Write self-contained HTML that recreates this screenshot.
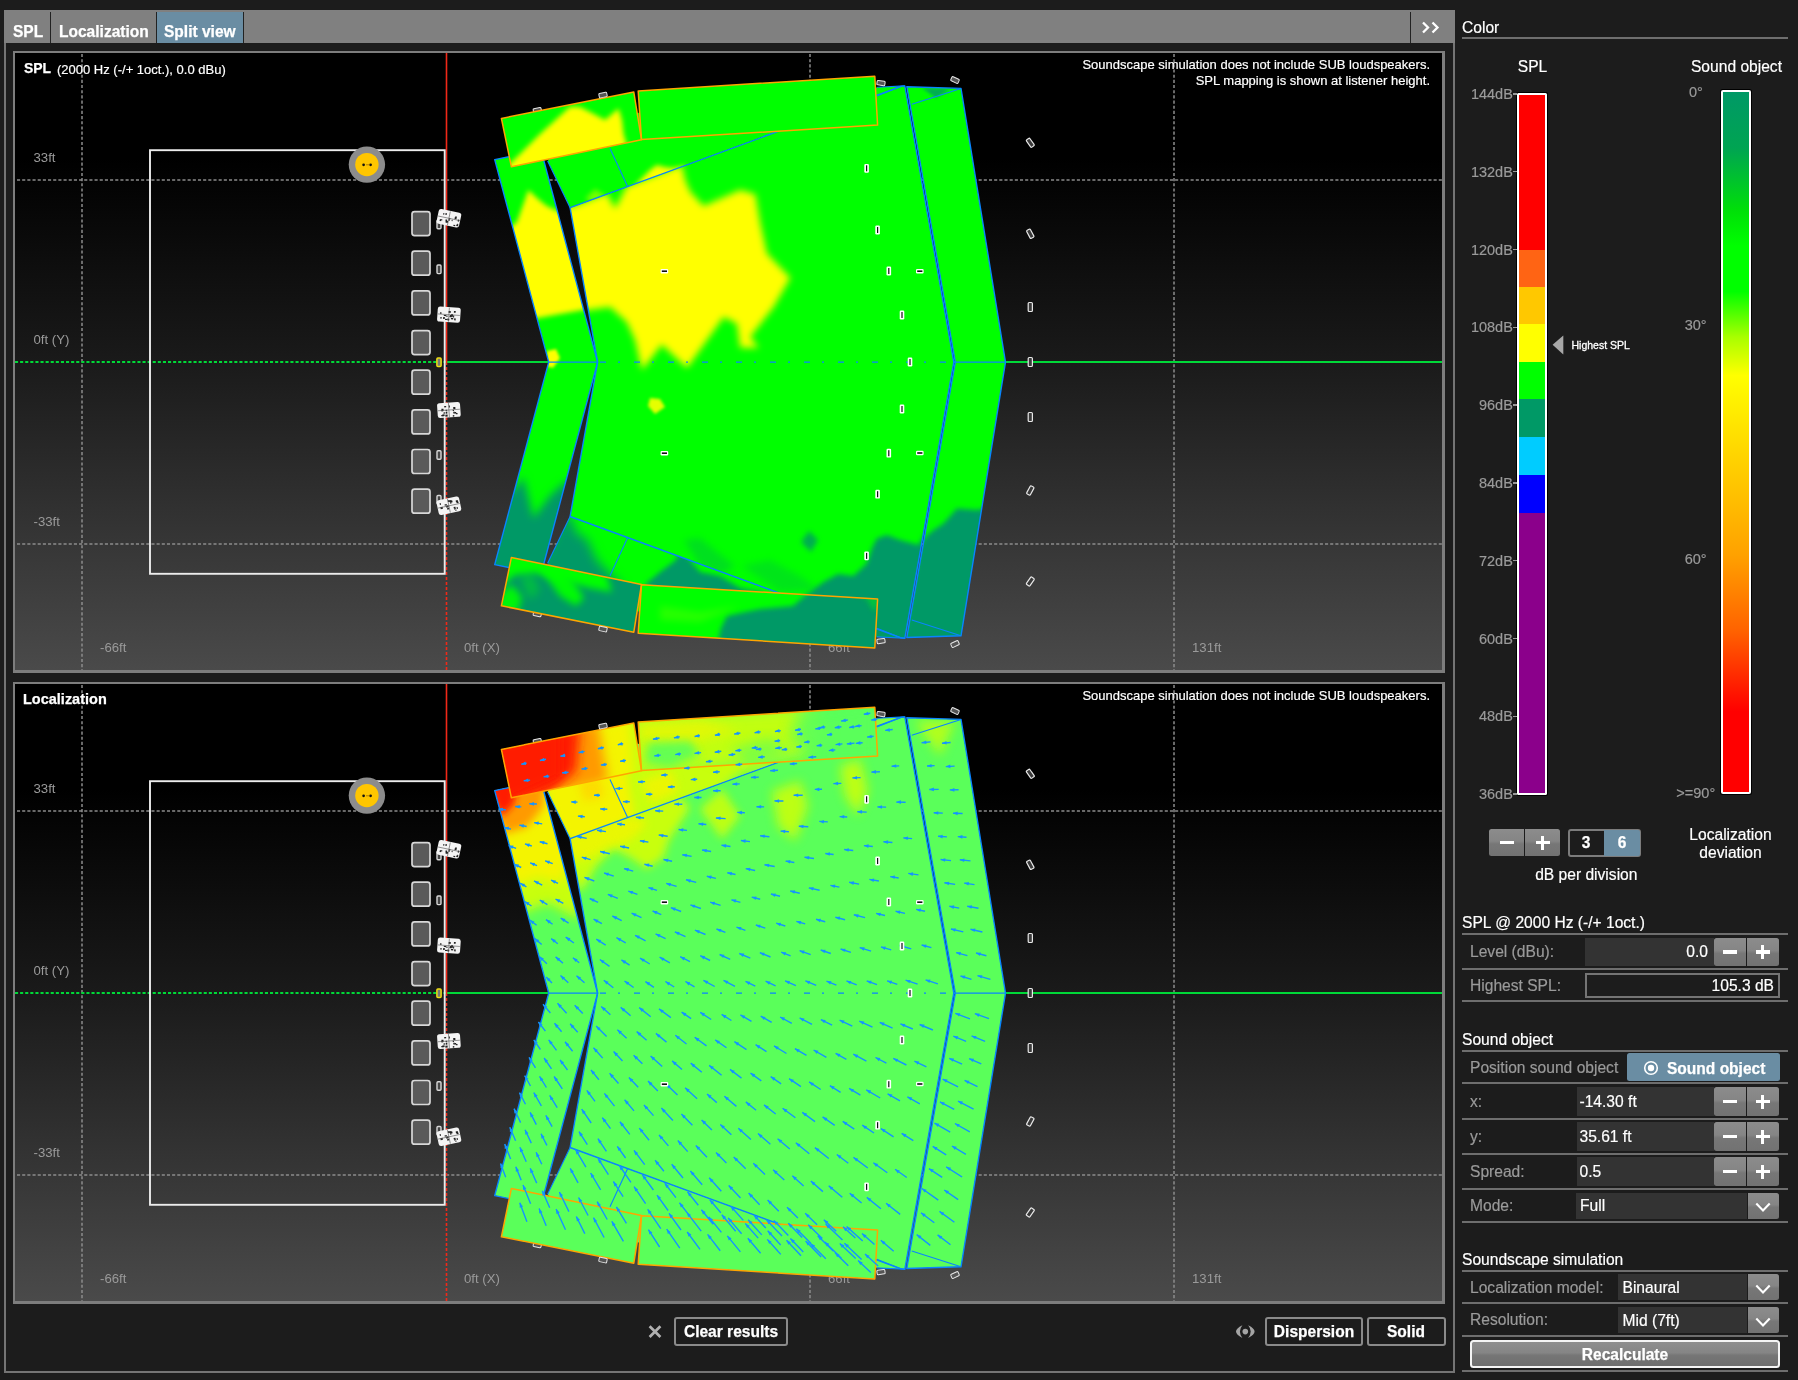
<!DOCTYPE html>
<html lang="en"><head><meta charset="utf-8"><title>Soundscape simulation</title>
<style>
html,body{margin:0;padding:0;}
body{width:1798px;height:1380px;background:#1c1c1c;overflow:hidden;position:relative;
 font-family:"Liberation Sans",sans-serif;font-size:15px;color:#fff;}
#app{position:absolute;left:0;top:0;width:1798px;height:1380px;will-change:transform;}
.abs{position:absolute;}
.t{position:absolute;white-space:nowrap;line-height:1;-webkit-text-stroke:0.18px currentColor;}
.g{color:#9a9a9a;}
.b,.bt{font-weight:bold;-webkit-text-stroke:0.25px currentColor;}
.hl{position:absolute;height:2px;background:#6e6e6e;left:1462px;width:326px;}
.fld{position:absolute;background:#333;}
.btn{position:absolute;background:linear-gradient(#8c8c8c 0%,#858585 45%,#777 55%,#727272 100%);border-radius:2px;}
.sec{left:1462px;}
.lab{left:1470px;color:#9a9a9a;}
svg{position:absolute;overflow:hidden;}
</style></head>
<body>
<div id="app">
<div class="abs" style="left:4px;top:10.3px;width:1447px;height:1358.9px;border:2px solid #747474;box-sizing:content-box"></div>
<div class="abs" style="left:4px;top:10.3px;width:1451px;height:32.9px;background:#808080"></div>
<div class="abs" style="left:157px;top:11.5px;width:86px;height:31.7px;background:#6a8da3"></div>
<div class="abs" style="left:50px;top:12px;width:1.3px;height:31px;background:#222"></div>
<div class="abs" style="left:156px;top:12px;width:1.3px;height:31px;background:#222"></div>
<div class="abs" style="left:243px;top:12px;width:1.3px;height:31px;background:#222"></div>
<div class="abs" style="left:1410px;top:12px;width:1.3px;height:31px;background:#222"></div>
<div class="t b" style="left:12.5px;top:23.1px;font-size:16.28px;transform:scaleX(0.955);transform-origin:left 50%;">SPL</div>
<div class="t b" style="left:58.5px;top:23.1px;font-size:16.28px;transform:scaleX(0.955);transform-origin:left 50%;">Localization</div>
<div class="t b" style="left:164px;top:23.1px;font-size:16.28px;transform:scaleX(0.955);transform-origin:left 50%;">Split view</div>
<svg style="left:1420px;top:18px" width="24" height="20" viewBox="0 0 24 20"><path d="M3 4.5 L8 9.5 L3 14.5 M12.5 4.5 L17.5 9.5 L12.5 14.5" fill="none" stroke="#fff" stroke-width="2.3"/></svg>
<div class="abs" style="left:13px;top:51.0px;width:1427.2px;height:617px;border:2px solid #7d7d7d;border-right-width:3.6px;border-bottom-width:3.6px;background:linear-gradient(#000 0%,#000 17%,#1a1a1a 50%,#4a4a4a 100%)"></div>
<svg style="left:15px;top:53.0px" width="1427" height="617" viewBox="15 53 1427 617" font-family="Liberation Sans, sans-serif"><defs><filter id="b2" x="-30%" y="-30%" width="160%" height="160%"><feGaussianBlur stdDeviation="1.8"/></filter><filter id="b3" x="-30%" y="-30%" width="160%" height="160%"><feGaussianBlur stdDeviation="2.7"/></filter><filter id="b4" x="-30%" y="-30%" width="160%" height="160%"><feGaussianBlur stdDeviation="3.6"/></filter><filter id="b5" x="-30%" y="-30%" width="160%" height="160%"><feGaussianBlur stdDeviation="4.5"/></filter><filter id="b6" x="-30%" y="-30%" width="160%" height="160%"><feGaussianBlur stdDeviation="5.4"/></filter><filter id="b8" x="-30%" y="-30%" width="160%" height="160%"><feGaussianBlur stdDeviation="7.2"/></filter><clipPath id="splwing"><polygon points="494.7,159.6 541.0,150.0 597.6,362.1 541.0,574.2 494.7,564.6 548.7,362.1"/></clipPath><clipPath id="splsu"><polygon points="547.6,161.0 570.1,207.7 901.0,86.4 904.8,85.9 870.0,87.6 870.0,105.0 640.0,112.0 560.0,142.0"/></clipPath><clipPath id="splsl"><polygon points="547.6,563.2 570.1,516.5 901.0,637.8 904.8,638.3 870.0,636.6 870.0,619.2 640.0,612.2 560.0,582.2"/></clipPath><clipPath id="splmain"><polygon points="570.1,207.7 901.0,86.4 904.8,85.9 953.8,362.1 904.8,638.3 901.0,637.8 570.1,516.5 597.6,362.1"/></clipPath><clipPath id="splrw"><polygon points="906.8,86.7 961.0,88.4 1005.5,362.1 961.0,635.8 906.8,637.5 955.3,362.1"/></clipPath><clipPath id="splb1u"><polygon points="501.4,118.4 633.8,92.0 641.5,139.8 511.4,166.8"/></clipPath><clipPath id="splb2u"><polygon points="638.2,90.9 874.8,76.2 877.6,125.1 641.5,139.5"/></clipPath><clipPath id="splb1l"><polygon points="501.4,605.8 633.8,632.2 641.5,584.4 511.4,557.4"/></clipPath><clipPath id="splb2l"><polygon points="638.2,633.3 874.8,648.0 877.6,599.1 641.5,584.7"/></clipPath></defs><line x1="82" y1="54" x2="82" y2="670" stroke="#8c8c8c" stroke-width="1.5" stroke-dasharray="3.1 2.07"/><line x1="810" y1="54" x2="810" y2="670" stroke="#8c8c8c" stroke-width="1.5" stroke-dasharray="3.1 2.07"/><line x1="1174" y1="54" x2="1174" y2="670" stroke="#8c8c8c" stroke-width="1.5" stroke-dasharray="3.1 2.07"/><line x1="17" y1="180" x2="1442" y2="180" stroke="#8c8c8c" stroke-width="1.5" stroke-dasharray="3.1 2.07"/><line x1="17" y1="544" x2="1442" y2="544" stroke="#8c8c8c" stroke-width="1.5" stroke-dasharray="3.1 2.07"/><line x1="15" y1="362" x2="446" y2="362" stroke="#00d838" stroke-width="1.9" stroke-dasharray="3.1 2"/><line x1="446" y1="362" x2="1442" y2="362" stroke="#00d838" stroke-width="1.9"/><line x1="446.5" y1="53" x2="446.5" y2="362" stroke="#f02818" stroke-width="1.6"/><line x1="446.5" y1="362" x2="446.5" y2="670" stroke="#f02818" stroke-width="1.6" stroke-dasharray="3 2"/><rect x="150" y="150.2" width="294.7" height="423.6" fill="none" stroke="#ececec" stroke-width="1.9"/><text x="33.5" y="161.7" fill="#9a9a9a" font-size="13.2">33ft</text><text x="33.5" y="343.7" fill="#9a9a9a" font-size="13.2">0ft (Y)</text><text x="33.5" y="525.7" fill="#9a9a9a" font-size="13.2">-33ft</text><text x="100" y="651.5" fill="#9a9a9a" font-size="13.2">-66ft</text><text x="464" y="651.5" fill="#9a9a9a" font-size="13.2">0ft (X)</text><text x="828" y="651.5" fill="#9a9a9a" font-size="13.2">66ft</text><text x="1192" y="651.5" fill="#9a9a9a" font-size="13.2">131ft</text><g clip-path="url(#splwing)"><polygon points="494.7,159.6 541.0,150.0 597.6,362.1 541.0,574.2 494.7,564.6 548.7,362.1" fill="#00ff00"/><polygon points="505.0,232.0 517.0,222.0 528.4,190.0 538.0,199.0 546.7,206.0 562.0,213.0 600.0,306.0 583.0,310.0 560.0,314.0 538.0,318.0 525.0,318.0" fill="#ffff00" filter="url(#b3)"/><polygon points="547.0,351.0 556.0,349.0 560.0,358.0 553.0,368.0 546.0,366.0" fill="#ffff00" filter="url(#b2)"/><polygon points="500.0,494.0 513.4,490.0 523.4,477.0 533.4,518.0 550.0,496.0 561.8,485.0 575.0,478.0 575.0,600.0 480.0,600.0" fill="#009966" filter="url(#b5)"/></g><g clip-path="url(#splsu)"><polygon points="547.6,161.0 570.1,207.7 901.0,86.4 904.8,85.9 870.0,87.6 870.0,105.0 640.0,112.0 560.0,142.0" fill="#00ff00"/><polygon points="630.0,192.0 640.0,180.0 650.0,170.0 657.0,165.0 664.0,167.0 672.0,168.0 686.0,166.0 690.0,185.0 650.0,200.0" fill="#ffff00" filter="url(#b3)"/><polygon points="585.0,199.0 595.0,189.0 606.0,196.0 600.0,206.0" fill="#ffff00" filter="url(#b3)" opacity="0.45"/><polygon points="612.0,208.0 618.0,196.0 628.0,190.0 630.0,200.0" fill="#ffff00" filter="url(#b3)" opacity="0.5"/></g><g clip-path="url(#splsl)"><polygon points="547.6,563.2 570.1,516.5 901.0,637.8 904.8,638.3 870.0,636.6 870.0,619.2 640.0,612.2 560.0,582.2" fill="#00ff00"/><polygon points="535.0,590.0 540.0,560.0 566.0,512.0 572.0,520.0 576.8,533.5 586.8,538.5 592.0,550.0 596.8,560.2 611.8,575.2 625.0,590.0" fill="#009966" filter="url(#b6)"/><polygon points="646.9,583.0 660.0,572.0 676.0,560.0 680.2,546.8 690.0,560.0 700.0,572.0 720.0,576.0 740.0,588.0 760.0,592.0 800.0,610.0 640.0,600.0" fill="#009966" filter="url(#b3)"/><polygon points="860.0,600.0 880.0,612.0 905.0,625.0 905.0,640.0 860.0,640.0" fill="#009966" filter="url(#b3)"/></g><g clip-path="url(#splmain)"><polygon points="570.1,207.7 901.0,86.4 904.8,85.9 953.8,362.1 904.8,638.3 901.0,637.8 570.1,516.5 597.6,362.1" fill="#00ff00"/><polygon points="560.0,200.0 570.0,207.6 606.7,193.0 615.1,208.4 626.8,186.0 681.8,165.0 685.2,180.0 690.2,191.7 703.5,205.9 740.2,190.1 755.3,194.2 760.3,223.4 766.9,253.5 790.3,277.7 773.6,306.9 750.2,336.9 758.6,347.7 740.2,347.7 736.9,323.5 723.5,316.9 706.9,340.2 687.0,368.0 661.8,344.5 642.0,370.0 635.1,340.2 626.8,321.9 610.1,306.9 586.7,310.2 560.0,311.0" fill="#ffff00" filter="url(#b4)"/><polygon points="650.0,398.0 660.0,399.0 665.0,407.0 655.0,414.0 648.0,406.0" fill="#ffff00" filter="url(#b2)" opacity="0.9"/><polygon points="800.0,600.0 823.4,582.0 838.0,574.0 853.4,576.0 866.8,563.5 872.0,548.0 876.8,538.5 886.8,535.0 900.0,540.0 918.5,545.0 926.9,530.0 960.0,520.0 960.0,660.0 800.0,660.0" fill="#009966" filter="url(#b3)"/><polygon points="809.0,531.0 818.0,540.0 811.0,552.0 801.0,542.0" fill="#009966" filter="url(#b3)" opacity="0.8"/><polygon points="684.0,540.0 700.0,538.0 722.0,556.0 735.0,566.0 720.0,575.0 700.0,566.0" fill="#009966" filter="url(#b4)" opacity="0.3"/><polygon points="742.0,566.0 770.0,560.0 800.0,576.0 820.0,590.0 780.0,592.0" fill="#009966" filter="url(#b4)" opacity="0.25"/></g><g clip-path="url(#splrw)"><polygon points="906.8,86.7 961.0,88.4 1005.5,362.1 961.0,635.8 906.8,637.5 955.3,362.1" fill="#00ff00"/><polygon points="920.0,545.0 925.0,537.0 933.5,530.0 943.5,523.4 956.9,508.4 977.0,510.0 1000.0,505.0 1000.0,660.0 900.0,660.0" fill="#009966" filter="url(#b3)"/><polygon points="922.0,88.0 950.0,89.0 936.0,98.0" fill="#009966" filter="url(#b2)" opacity="0.8"/></g><polygon points="494.7,159.6 541.0,150.0 597.6,362.1 541.0,574.2 494.7,564.6 548.7,362.1" fill="none" stroke="#0a84ff" stroke-width="1.4" stroke-linejoin="round"/><polygon points="570.1,207.7 901.0,86.4 904.8,85.9 953.8,362.1 904.8,638.3 901.0,637.8 570.1,516.5 597.6,362.1" fill="none" stroke="#0a84ff" stroke-width="1.4" stroke-linejoin="round"/><polygon points="906.8,86.7 961.0,88.4 1005.5,362.1 961.0,635.8 906.8,637.5 955.3,362.1" fill="none" stroke="#0a84ff" stroke-width="1.4" stroke-linejoin="round"/><line x1="547.6" y1="161" x2="570.1" y2="207.7" stroke="#0a84ff" stroke-width="1.1"/><line x1="610" y1="148.4" x2="627.7" y2="186.8" stroke="#0a84ff" stroke-width="1.1"/><line x1="876.8" y1="95.9" x2="901" y2="86.4" stroke="#0a84ff" stroke-width="1.1"/><line x1="911.8" y1="104.2" x2="960.2" y2="88.7" stroke="#0a84ff" stroke-width="1.1"/><line x1="877" y1="87.3" x2="904.8" y2="85.9" stroke="#0a84ff" stroke-width="1.1"/><line x1="547.6" y1="563.2" x2="570.1" y2="516.5" stroke="#0a84ff" stroke-width="1.1"/><line x1="610" y1="575.8000000000001" x2="627.7" y2="537.4000000000001" stroke="#0a84ff" stroke-width="1.1"/><line x1="876.8" y1="628.3000000000001" x2="901" y2="637.8000000000001" stroke="#0a84ff" stroke-width="1.1"/><line x1="911.8" y1="620.0" x2="960.2" y2="635.5" stroke="#0a84ff" stroke-width="1.1"/><line x1="877" y1="636.9000000000001" x2="904.8" y2="638.3000000000001" stroke="#0a84ff" stroke-width="1.1"/><line x1="600" y1="362.1" x2="952" y2="362.1" stroke="#0a84ff" stroke-width="1.1" stroke-dasharray="6 12 2 14"/><line x1="548.7" y1="362.1" x2="597.6" y2="362.1" stroke="#0a84ff" stroke-width="1.2"/><line x1="953.8" y1="362.1" x2="1005.5" y2="362.1" stroke="#0a84ff" stroke-width="1.2"/><rect x="533.3" y="108.0" width="8" height="4.5" rx="1" fill="#555" stroke="#e8e8e8" stroke-width="1" transform="rotate(-12 537.3 110.2)"/><rect x="533.3" y="611.6" width="8" height="4.5" rx="1" fill="#555" stroke="#e8e8e8" stroke-width="1" transform="rotate(12 537.3 613.9)"/><g clip-path="url(#splb1u)"><polygon points="501.4,118.4 633.8,92.0 641.5,139.8 511.4,166.8" fill="#00ff00"/><polygon points="500.0,172.0 512.0,162.0 540.0,134.0 570.0,106.7 580.0,107.0 592.0,113.0 605.0,120.0 618.5,108.4 622.0,120.0 623.5,133.4 628.0,150.0 560.0,170.0" fill="#ffff00" filter="url(#b3)"/></g><g clip-path="url(#splb2u)"><polygon points="638.2,90.9 874.8,76.2 877.6,125.1 641.5,139.5" fill="#00ff00"/></g><g clip-path="url(#splb1l)"><polygon points="501.4,605.8 633.8,632.2 641.5,584.4 511.4,557.4" fill="#00ff00"/><polygon points="490.0,540.0 660.0,540.0 660.0,650.0 490.0,650.0" fill="#009966" filter="url(#b2)"/><polygon points="498.0,548.0 515.0,550.0 560.0,561.0 606.0,573.0 612.0,592.0 590.0,588.0 574.0,584.0 560.0,580.0 536.0,573.0 514.0,575.0 505.0,584.0 496.0,580.0" fill="#00ff00" filter="url(#b4)"/><polygon points="538.0,566.0 560.0,566.0 574.0,582.0 584.0,598.0 576.0,606.0 560.0,596.0" fill="#00ff00" filter="url(#b4)" opacity="0.95"/><polygon points="494.0,616.0 501.0,592.0 512.0,585.0 522.0,597.0 518.0,612.0" fill="#00ff00" filter="url(#b4)" opacity="0.9"/><polygon points="520.0,578.0 532.0,574.0 540.0,590.0 530.0,600.0" fill="#00ff00" filter="url(#b5)" opacity="0.35"/></g><g clip-path="url(#splb2l)"><polygon points="638.2,633.3 874.8,648.0 877.6,599.1 641.5,584.7" fill="#00ff00"/><polygon points="716.0,650.0 721.0,628.0 727.0,616.0 745.0,612.0 760.0,609.0 793.0,606.0 800.0,600.0 806.8,594.0 812.0,580.0 890.0,580.0 890.0,660.0 716.0,660.0" fill="#009966" filter="url(#b3)"/><polygon points="858.0,596.0 866.0,598.0 874.0,612.0 880.0,600.0 880.0,590.0 858.0,590.0" fill="#00e020" filter="url(#b3)" opacity="0.6"/><polygon points="660.0,606.0 700.0,612.0 740.0,606.0 700.0,622.0 660.0,620.0" fill="#70ff00" filter="url(#b4)" opacity="0.35"/></g><polygon points="501.4,118.4 633.8,92.0 641.5,139.8 511.4,166.8" fill="none" stroke="#ffa500" stroke-width="1.5" stroke-linejoin="round"/><polygon points="638.2,90.9 874.8,76.2 877.6,125.1 641.5,139.5" fill="none" stroke="#ffa500" stroke-width="1.5" stroke-linejoin="round"/><polygon points="501.4,605.8 633.8,632.2 641.5,584.4 511.4,557.4" fill="none" stroke="#ffa500" stroke-width="1.5" stroke-linejoin="round"/><polygon points="638.2,633.3 874.8,648.0 877.6,599.1 641.5,584.7" fill="none" stroke="#ffa500" stroke-width="1.5" stroke-linejoin="round"/><rect x="864.3000000000001" y="163.9" width="4.6" height="8.8" rx="1.2" fill="#fff"/><rect x="866.0" y="165.3" width="1.2" height="6" fill="#111"/><rect x="875.3000000000001" y="225.6" width="4.6" height="8.8" rx="1.2" fill="#fff"/><rect x="877.0" y="227" width="1.2" height="6" fill="#111"/><rect x="886.5" y="266.6" width="4.6" height="8.8" rx="1.2" fill="#fff"/><rect x="888.1999999999999" y="268" width="1.2" height="6" fill="#111"/><rect x="916.0" y="268.9" width="7.6" height="4.6" rx="1.2" fill="#fff"/><rect x="917.1999999999999" y="270.4" width="5.2" height="1.6" fill="#111"/><rect x="899.7" y="310.6" width="4.6" height="8.8" rx="1.2" fill="#fff"/><rect x="901.4" y="312" width="1.2" height="6" fill="#111"/><rect x="907.7" y="357.6" width="4.6" height="8.8" rx="1.2" fill="#fff"/><rect x="909.4" y="359" width="1.2" height="6" fill="#111"/><rect x="899.7" y="404.6" width="4.6" height="8.8" rx="1.2" fill="#fff"/><rect x="901.4" y="406" width="1.2" height="6" fill="#111"/><rect x="886.5" y="448.8" width="4.6" height="8.8" rx="1.2" fill="#fff"/><rect x="888.1999999999999" y="450.2" width="1.2" height="6" fill="#111"/><rect x="916.0" y="450.7" width="7.6" height="4.6" rx="1.2" fill="#fff"/><rect x="917.1999999999999" y="452.2" width="5.2" height="1.6" fill="#111"/><rect x="875.3000000000001" y="489.8" width="4.6" height="8.8" rx="1.2" fill="#fff"/><rect x="877.0" y="491.2" width="1.2" height="6" fill="#111"/><rect x="864.3000000000001" y="551.5" width="4.6" height="8.8" rx="1.2" fill="#fff"/><rect x="866.0" y="552.9" width="1.2" height="6" fill="#111"/><rect x="660.6" y="268.9" width="7.6" height="4.6" rx="1.2" fill="#fff"/><rect x="661.8" y="270.4" width="5.2" height="1.6" fill="#111"/><rect x="660.6" y="450.9" width="7.6" height="4.6" rx="1.2" fill="#fff"/><rect x="661.8" y="452.4" width="5.2" height="1.6" fill="#111"/><rect x="1028.2" y="138.3" width="4.2" height="9" rx="1" fill="#3a3a3a" stroke="#e8e8e8" stroke-width="1.2" transform="rotate(-35 1030.3 142.8)"/><rect x="1028.2" y="229.3" width="4.2" height="9" rx="1" fill="#3a3a3a" stroke="#e8e8e8" stroke-width="1.2" transform="rotate(-28 1030.3 233.8)"/><rect x="1028.2" y="302.5" width="4.2" height="9" rx="1" fill="#3a3a3a" stroke="#e8e8e8" stroke-width="1.2" transform="rotate(0 1030.3 307.0)"/><rect x="1028.2" y="357.5" width="4.2" height="9" rx="1" fill="#3a3a3a" stroke="#e8e8e8" stroke-width="1.2" transform="rotate(0 1030.3 362.0)"/><rect x="1028.2" y="412.5" width="4.2" height="9" rx="1" fill="#3a3a3a" stroke="#e8e8e8" stroke-width="1.2" transform="rotate(0 1030.3 417.0)"/><rect x="1028.2" y="486.0" width="4.2" height="9" rx="1" fill="#3a3a3a" stroke="#e8e8e8" stroke-width="1.2" transform="rotate(28 1030.3 490.5)"/><rect x="1028.2" y="577.0" width="4.2" height="9" rx="1" fill="#3a3a3a" stroke="#e8e8e8" stroke-width="1.2" transform="rotate(35 1030.3 581.5)"/><rect x="599.0" y="92.8" width="8" height="4.5" rx="1" fill="#555" stroke="#e8e8e8" stroke-width="1" transform="rotate(-12 603.0 95.0)"/><rect x="877.0" y="80.8" width="8" height="4.5" rx="1" fill="#555" stroke="#e8e8e8" stroke-width="1" transform="rotate(8 881.0 83.0)"/><rect x="951.0" y="77.8" width="8" height="4.5" rx="1" fill="#555" stroke="#e8e8e8" stroke-width="1" transform="rotate(25 955.0 80.0)"/><rect x="599.0" y="626.8" width="8" height="4.5" rx="1" fill="#555" stroke="#e8e8e8" stroke-width="1" transform="rotate(12 603.0 629.0)"/><rect x="877.0" y="638.8" width="8" height="4.5" rx="1" fill="#555" stroke="#e8e8e8" stroke-width="1" transform="rotate(-8 881.0 641.0)"/><rect x="951.0" y="641.8" width="8" height="4.5" rx="1" fill="#555" stroke="#e8e8e8" stroke-width="1" transform="rotate(-25 955.0 644.0)"/><rect x="437.0" y="220.2" width="4" height="8.6" rx="1" fill="#444" stroke="#d8d8d8" stroke-width="1.4" transform="rotate(0 439.0 224.5)"/><rect x="437.0" y="265.0" width="4" height="8.6" rx="1" fill="#444" stroke="#d8d8d8" stroke-width="1.4" transform="rotate(0 439.0 269.3)"/><rect x="437.0" y="450.7" width="4" height="8.6" rx="1" fill="#444" stroke="#d8d8d8" stroke-width="1.4" transform="rotate(0 439.0 455.0)"/><rect x="437.0" y="495.5" width="4" height="8.6" rx="1" fill="#444" stroke="#d8d8d8" stroke-width="1.4" transform="rotate(0 439.0 499.8)"/><rect x="436.9" y="357.9" width="4.2" height="8.6" rx="1" fill="#777" stroke="#f0e010" stroke-width="1.5" transform="rotate(0 439.0 362.2)"/><rect x="412" y="211.6" width="18" height="24" rx="2.5" fill="#5a5a5a" stroke="#d8d8d8" stroke-width="1.7"/><rect x="412" y="251.2" width="18" height="24" rx="2.5" fill="#5a5a5a" stroke="#d8d8d8" stroke-width="1.7"/><rect x="412" y="290.9" width="18" height="24" rx="2.5" fill="#5a5a5a" stroke="#d8d8d8" stroke-width="1.7"/><rect x="412" y="330.6" width="18" height="24" rx="2.5" fill="#5a5a5a" stroke="#d8d8d8" stroke-width="1.7"/><rect x="412" y="370.2" width="18" height="24" rx="2.5" fill="#5a5a5a" stroke="#d8d8d8" stroke-width="1.7"/><rect x="412" y="409.9" width="18" height="24" rx="2.5" fill="#5a5a5a" stroke="#d8d8d8" stroke-width="1.7"/><rect x="412" y="449.5" width="18" height="24" rx="2.5" fill="#5a5a5a" stroke="#d8d8d8" stroke-width="1.7"/><rect x="412" y="489.2" width="18" height="24" rx="2.5" fill="#5a5a5a" stroke="#d8d8d8" stroke-width="1.7"/><g transform="translate(448.9 218.3) rotate(12)"><rect x="-11.5" y="-7.5" width="23" height="15" rx="2.5" fill="#f4f4f4"/><rect x="9.1" y="-0.8" width="1.5" height="2.0" fill="#222"/><rect x="5.9" y="5.3" width="1.8" height="1.2" fill="#222"/><rect x="-2.5" y="2.7" width="2.3" height="2.1" fill="#222"/><rect x="3.1" y="0.7" width="1.0" height="1.5" fill="#222"/><rect x="9.1" y="3.6" width="1.3" height="1.0" fill="#222"/><rect x="-2.4" y="2.2" width="1.0" height="2.1" fill="#222"/><rect x="0.0" y="1.0" width="1.4" height="1.3" fill="#222"/><rect x="-8.7" y="3.1" width="1.6" height="1.3" fill="#222"/><rect x="-4.3" y="-4.5" width="1.4" height="1.8" fill="#222"/><rect x="6.0" y="-3.3" width="1.4" height="1.8" fill="#222"/><rect x="-6.5" y="-4.1" width="1.1" height="1.5" fill="#222"/><rect x="8.7" y="4.6" width="1.9" height="1.4" fill="#222"/><rect x="-8.3" y="2.4" width="2.2" height="1.1" fill="#222"/><rect x="5.6" y="-2.5" width="1.9" height="2.0" fill="#222"/><rect x="0.3" y="-0.3" width="1.2" height="1.2" fill="#222"/><rect x="-2.9" y="1.7" width="1.6" height="1.5" fill="#222"/><path d="M-11 0 H11 M0 -7 V7" stroke="#555" stroke-width="0.6"/></g><g transform="translate(448.9 314.7) rotate(4)"><rect x="-11.5" y="-7.5" width="23" height="15" rx="2.5" fill="#f4f4f4"/><rect x="5.6" y="3.2" width="1.5" height="2.0" fill="#222"/><rect x="-0.5" y="-3.7" width="2.1" height="1.8" fill="#222"/><rect x="4.3" y="0.5" width="1.1" height="1.9" fill="#222"/><rect x="4.8" y="-4.1" width="1.8" height="1.8" fill="#222"/><rect x="0.8" y="1.1" width="1.4" height="1.4" fill="#222"/><rect x="2.4" y="-0.8" width="1.6" height="2.0" fill="#222"/><rect x="2.3" y="3.0" width="2.3" height="1.4" fill="#222"/><rect x="-9.0" y="-1.8" width="1.6" height="1.4" fill="#222"/><rect x="1.1" y="0.1" width="1.9" height="2.1" fill="#222"/><rect x="-8.5" y="3.1" width="1.7" height="1.2" fill="#222"/><rect x="-1.3" y="3.9" width="2.0" height="1.8" fill="#222"/><rect x="-5.5" y="2.7" width="1.6" height="1.9" fill="#222"/><rect x="-3.5" y="4.4" width="2.1" height="1.1" fill="#222"/><rect x="-5.0" y="0.5" width="2.2" height="1.1" fill="#222"/><rect x="2.1" y="0.0" width="2.2" height="1.7" fill="#222"/><rect x="-3.1" y="1.1" width="2.0" height="1.0" fill="#222"/><path d="M-11 0 H11 M0 -7 V7" stroke="#555" stroke-width="0.6"/></g><g transform="translate(448.9 410) rotate(-4)"><rect x="-11.5" y="-7.5" width="23" height="15" rx="2.5" fill="#f4f4f4"/><rect x="3.5" y="5.4" width="1.5" height="1.5" fill="#222"/><rect x="-3.2" y="1.5" width="1.5" height="2.0" fill="#222"/><rect x="-8.0" y="4.5" width="2.3" height="1.3" fill="#222"/><rect x="3.8" y="0.1" width="1.2" height="1.2" fill="#222"/><rect x="-7.0" y="3.9" width="2.3" height="1.9" fill="#222"/><rect x="-3.9" y="4.4" width="2.3" height="2.1" fill="#222"/><rect x="4.2" y="2.1" width="1.5" height="1.7" fill="#222"/><rect x="5.4" y="2.5" width="1.7" height="1.5" fill="#222"/><rect x="-3.3" y="-0.4" width="1.6" height="1.1" fill="#222"/><rect x="-7.4" y="-1.7" width="2.0" height="2.1" fill="#222"/><rect x="4.5" y="-2.6" width="2.1" height="2.1" fill="#222"/><rect x="0.2" y="-4.5" width="1.0" height="2.0" fill="#222"/><rect x="6.7" y="3.5" width="1.7" height="1.3" fill="#222"/><rect x="-5.6" y="2.0" width="1.8" height="1.3" fill="#222"/><rect x="-4.4" y="-4.3" width="1.9" height="1.4" fill="#222"/><rect x="-7.5" y="-0.8" width="1.8" height="1.7" fill="#222"/><path d="M-11 0 H11 M0 -7 V7" stroke="#555" stroke-width="0.6"/></g><g transform="translate(448.9 505.8) rotate(-12)"><rect x="-11.5" y="-7.5" width="23" height="15" rx="2.5" fill="#f4f4f4"/><rect x="-2.8" y="-0.6" width="2.4" height="1.9" fill="#222"/><rect x="2.7" y="-4.6" width="1.7" height="1.9" fill="#222"/><rect x="7.7" y="-3.9" width="2.1" height="2.2" fill="#222"/><rect x="-4.0" y="-2.3" width="2.2" height="1.3" fill="#222"/><rect x="-0.1" y="-5.5" width="1.6" height="1.7" fill="#222"/><rect x="5.3" y="5.3" width="1.3" height="1.0" fill="#222"/><rect x="8.4" y="-2.2" width="1.7" height="1.5" fill="#222"/><rect x="-8.7" y="-0.4" width="2.3" height="2.0" fill="#222"/><rect x="1.5" y="-4.8" width="2.3" height="1.6" fill="#222"/><rect x="-8.6" y="-4.5" width="1.1" height="1.9" fill="#222"/><rect x="1.8" y="-3.2" width="1.2" height="1.5" fill="#222"/><rect x="-2.3" y="1.9" width="1.8" height="1.6" fill="#222"/><rect x="0.9" y="-5.1" width="2.3" height="1.1" fill="#222"/><rect x="4.6" y="3.4" width="1.5" height="1.5" fill="#222"/><rect x="7.1" y="3.1" width="1.2" height="1.7" fill="#222"/><rect x="4.3" y="2.2" width="1.8" height="1.4" fill="#222"/><path d="M-11 0 H11 M0 -7 V7" stroke="#555" stroke-width="0.6"/></g><circle cx="366.9" cy="164.6" r="18.2" fill="#8c8c8c"/><circle cx="366.9" cy="164.6" r="11.7" fill="#ffc600"/><circle cx="363.6" cy="164.8" r="1.35" fill="#111"/><circle cx="370.6" cy="164.8" r="1.35" fill="#111"/><path d="M366 164.8 H369.5" stroke="#b07800" stroke-width="0.9"/></svg>
<div class="abs" style="left:13px;top:681.5px;width:1427.2px;height:617px;border:2px solid #7d7d7d;border-right-width:3.6px;border-bottom-width:3.6px;background:linear-gradient(#000 0%,#000 17%,#1a1a1a 50%,#4a4a4a 100%)"></div>
<svg style="left:15px;top:683.5px" width="1427" height="617" viewBox="15 53 1427 617" font-family="Liberation Sans, sans-serif"><defs><clipPath id="locwing"><polygon points="494.7,159.6 541.0,150.0 597.6,362.1 541.0,574.2 494.7,564.6 548.7,362.1"/></clipPath><clipPath id="locsu"><polygon points="547.6,161.0 570.1,207.7 901.0,86.4 904.8,85.9 870.0,87.6 870.0,105.0 640.0,112.0 560.0,142.0"/></clipPath><clipPath id="locsl"><polygon points="547.6,563.2 570.1,516.5 901.0,637.8 904.8,638.3 870.0,636.6 870.0,619.2 640.0,612.2 560.0,582.2"/></clipPath><clipPath id="locmain"><polygon points="570.1,207.7 901.0,86.4 904.8,85.9 953.8,362.1 904.8,638.3 901.0,637.8 570.1,516.5 597.6,362.1"/></clipPath><clipPath id="locrw"><polygon points="906.8,86.7 961.0,88.4 1005.5,362.1 961.0,635.8 906.8,637.5 955.3,362.1"/></clipPath><clipPath id="locb1u"><polygon points="501.4,118.4 633.8,92.0 641.5,139.8 511.4,166.8"/></clipPath><clipPath id="locb2u"><polygon points="638.2,90.9 874.8,76.2 877.6,125.1 641.5,139.5"/></clipPath><clipPath id="locb1l"><polygon points="501.4,605.8 633.8,632.2 641.5,584.4 511.4,557.4"/></clipPath><clipPath id="locb2l"><polygon points="638.2,633.3 874.8,648.0 877.6,599.1 641.5,584.7"/></clipPath></defs><line x1="82" y1="54" x2="82" y2="670" stroke="#8c8c8c" stroke-width="1.5" stroke-dasharray="3.1 2.07"/><line x1="810" y1="54" x2="810" y2="670" stroke="#8c8c8c" stroke-width="1.5" stroke-dasharray="3.1 2.07"/><line x1="1174" y1="54" x2="1174" y2="670" stroke="#8c8c8c" stroke-width="1.5" stroke-dasharray="3.1 2.07"/><line x1="17" y1="180" x2="1442" y2="180" stroke="#8c8c8c" stroke-width="1.5" stroke-dasharray="3.1 2.07"/><line x1="17" y1="544" x2="1442" y2="544" stroke="#8c8c8c" stroke-width="1.5" stroke-dasharray="3.1 2.07"/><line x1="15" y1="362" x2="446" y2="362" stroke="#00d838" stroke-width="1.9" stroke-dasharray="3.1 2"/><line x1="446" y1="362" x2="1442" y2="362" stroke="#00d838" stroke-width="1.9"/><line x1="446.5" y1="53" x2="446.5" y2="362" stroke="#f02818" stroke-width="1.6"/><line x1="446.5" y1="362" x2="446.5" y2="670" stroke="#f02818" stroke-width="1.6" stroke-dasharray="3 2"/><rect x="150" y="150.2" width="294.7" height="423.6" fill="none" stroke="#ececec" stroke-width="1.9"/><text x="33.5" y="161.7" fill="#9a9a9a" font-size="13.2">33ft</text><text x="33.5" y="343.7" fill="#9a9a9a" font-size="13.2">0ft (Y)</text><text x="33.5" y="525.7" fill="#9a9a9a" font-size="13.2">-33ft</text><text x="100" y="651.5" fill="#9a9a9a" font-size="13.2">-66ft</text><text x="464" y="651.5" fill="#9a9a9a" font-size="13.2">0ft (X)</text><text x="828" y="651.5" fill="#9a9a9a" font-size="13.2">66ft</text><text x="1192" y="651.5" fill="#9a9a9a" font-size="13.2">131ft</text><g clip-path="url(#locwing)"><polygon points="494.7,159.6 541.0,150.0 597.6,362.1 541.0,574.2 494.7,564.6 548.7,362.1" fill="#5aff5a"/><polygon points="480.0,140.0 570.0,140.0 588.0,240.0 578.0,288.0 548.0,272.0 522.0,282.0 505.0,240.0" fill="#c8ff10" filter="url(#b6)"/><polygon points="480.0,140.0 565.0,140.0 574.0,215.0 562.0,252.0 537.0,246.0 516.0,256.0 498.0,220.0" fill="#f4f400" filter="url(#b6)"/><polygon points="485.0,150.0 545.0,150.0 543.0,176.0 527.0,196.0 504.0,203.0" fill="#ff9a00" filter="url(#b5)"/><polygon points="485.0,150.0 518.0,150.0 514.0,173.0 501.0,186.0" fill="#ff1a00" filter="url(#b4)"/></g><g clip-path="url(#locsu)"><polygon points="547.6,161.0 570.1,207.7 901.0,86.4 904.8,85.9 870.0,87.6 870.0,105.0 640.0,112.0 560.0,142.0" fill="#5aff5a"/><polygon points="540.0,140.0 700.0,105.0 760.0,125.0 720.0,160.0 640.0,190.0 590.0,212.0 560.0,205.0" fill="#c8ff10" filter="url(#b6)"/><polygon points="540.0,140.0 625.0,130.0 634.0,186.0 572.0,214.0 555.0,190.0" fill="#f4f400" filter="url(#b5)"/><polygon points="640.0,150.0 672.0,140.0 678.0,160.0 652.0,172.0" fill="#f4f400" filter="url(#b5)" opacity="0.8"/><polygon points="578.0,150.0 600.0,146.0 604.0,166.0 584.0,170.0" fill="#ffd200" filter="url(#b5)" opacity="0.7"/><polygon points="700.0,120.0 900.0,85.0 905.0,95.0 760.0,145.0" fill="#c8ff10" filter="url(#b8)" opacity="0.7"/></g><g clip-path="url(#locsl)"><polygon points="547.6,563.2 570.1,516.5 901.0,637.8 904.8,638.3 870.0,636.6 870.0,619.2 640.0,612.2 560.0,582.2" fill="#5aff5a"/></g><g clip-path="url(#locmain)"><polygon points="570.1,207.7 901.0,86.4 904.8,85.9 953.8,362.1 904.8,638.3 901.0,637.8 570.1,516.5 597.6,362.1" fill="#5aff5a"/><polygon points="562.0,204.0 646.9,174.0 676.9,164.0 690.0,176.3 668.6,209.7 663.5,226.4 646.9,238.0 630.2,226.4 613.5,218.0 596.8,234.7 586.8,251.4 580.1,262.0 566.0,230.0" fill="#c8ff10" filter="url(#b5)"/><polygon points="566.0,206.0 630.2,184.0 648.0,192.0 630.2,209.7 606.8,216.4 586.8,228.0 572.0,230.0" fill="#f4f400" filter="url(#b5)" opacity="0.75"/><polygon points="700.0,178.0 722.0,158.0 740.0,185.0 722.0,208.0" fill="#c8ff10" filter="url(#b5)" opacity="0.9"/><polygon points="772.0,160.0 800.0,150.0 808.0,175.0 795.0,210.0 778.0,195.0" fill="#c8ff10" filter="url(#b6)" opacity="0.9"/><polygon points="840.0,135.0 860.0,128.0 868.0,160.0 858.0,185.0 845.0,165.0" fill="#c8ff10" filter="url(#b6)" opacity="0.9"/></g><g clip-path="url(#locrw)"><polygon points="906.8,86.7 961.0,88.4 1005.5,362.1 961.0,635.8 906.8,637.5 955.3,362.1" fill="#5aff5a"/><polygon points="915.0,90.0 955.0,90.0 940.0,125.0" fill="#c8ff10" filter="url(#b6)" opacity="0.8"/></g><polygon points="494.7,159.6 541.0,150.0 597.6,362.1 541.0,574.2 494.7,564.6 548.7,362.1" fill="none" stroke="#0a84ff" stroke-width="1.4" stroke-linejoin="round"/><polygon points="570.1,207.7 901.0,86.4 904.8,85.9 953.8,362.1 904.8,638.3 901.0,637.8 570.1,516.5 597.6,362.1" fill="none" stroke="#0a84ff" stroke-width="1.4" stroke-linejoin="round"/><polygon points="906.8,86.7 961.0,88.4 1005.5,362.1 961.0,635.8 906.8,637.5 955.3,362.1" fill="none" stroke="#0a84ff" stroke-width="1.4" stroke-linejoin="round"/><line x1="547.6" y1="161" x2="570.1" y2="207.7" stroke="#0a84ff" stroke-width="1.1"/><line x1="610" y1="148.4" x2="627.7" y2="186.8" stroke="#0a84ff" stroke-width="1.1"/><line x1="876.8" y1="95.9" x2="901" y2="86.4" stroke="#0a84ff" stroke-width="1.1"/><line x1="911.8" y1="104.2" x2="960.2" y2="88.7" stroke="#0a84ff" stroke-width="1.1"/><line x1="877" y1="87.3" x2="904.8" y2="85.9" stroke="#0a84ff" stroke-width="1.1"/><line x1="547.6" y1="563.2" x2="570.1" y2="516.5" stroke="#0a84ff" stroke-width="1.1"/><line x1="610" y1="575.8000000000001" x2="627.7" y2="537.4000000000001" stroke="#0a84ff" stroke-width="1.1"/><line x1="876.8" y1="628.3000000000001" x2="901" y2="637.8000000000001" stroke="#0a84ff" stroke-width="1.1"/><line x1="911.8" y1="620.0" x2="960.2" y2="635.5" stroke="#0a84ff" stroke-width="1.1"/><line x1="877" y1="636.9000000000001" x2="904.8" y2="638.3000000000001" stroke="#0a84ff" stroke-width="1.1"/><line x1="600" y1="362.1" x2="952" y2="362.1" stroke="#0a84ff" stroke-width="1.1" stroke-dasharray="6 12 2 14"/><line x1="548.7" y1="362.1" x2="597.6" y2="362.1" stroke="#0a84ff" stroke-width="1.2"/><line x1="953.8" y1="362.1" x2="1005.5" y2="362.1" stroke="#0a84ff" stroke-width="1.2"/><rect x="533.3" y="108.0" width="8" height="4.5" rx="1" fill="#555" stroke="#e8e8e8" stroke-width="1" transform="rotate(-12 537.3 110.2)"/><rect x="533.3" y="611.6" width="8" height="4.5" rx="1" fill="#555" stroke="#e8e8e8" stroke-width="1" transform="rotate(12 537.3 613.9)"/><g clip-path="url(#locb1u)"><polygon points="501.4,118.4 633.8,92.0 641.5,139.8 511.4,166.8" fill="#5aff5a"/><polygon points="490.0,110.0 650.0,85.0 650.0,150.0 500.0,175.0" fill="#c8ff10" filter="url(#b3)"/><polygon points="490.0,110.0 630.0,88.0 634.0,150.0 500.0,175.0" fill="#f4f400" filter="url(#b6)"/><polygon points="490.0,110.0 598.0,92.0 608.0,150.0 500.0,175.0" fill="#ff9a00" filter="url(#b6)"/><polygon points="490.0,110.0 580.0,95.0 576.0,140.0 552.0,160.0 500.0,175.0" fill="#ff1a00" filter="url(#b6)"/><polygon points="495.0,115.0 560.0,100.0 560.0,145.0 505.0,170.0" fill="#ff1a00" filter="url(#b5)"/></g><g clip-path="url(#locb2u)"><polygon points="638.2,90.9 874.8,76.2 877.6,125.1 641.5,139.5" fill="#5aff5a"/><polygon points="630.0,85.0 800.0,75.0 830.0,100.0 800.0,125.0 700.0,140.0 630.0,145.0" fill="#c8ff10" filter="url(#b8)" opacity="0.95"/><polygon points="636.0,92.0 700.0,88.0 740.0,100.0 690.0,112.0 640.0,110.0" fill="#f4f400" filter="url(#b6)" opacity="0.6"/><polygon points="648.0,112.0 690.0,110.0 700.0,124.0 670.0,136.0 645.0,132.0" fill="#5aff5a" filter="url(#b5)" opacity="0.9"/><polygon points="800.0,80.0 880.0,70.0 880.0,130.0 820.0,130.0 790.0,108.0" fill="#5aff5a" filter="url(#b8)" opacity="0.9"/><polygon points="730.0,118.0 770.0,106.0 790.0,120.0 750.0,134.0" fill="#5aff5a" filter="url(#b6)" opacity="0.6"/></g><g clip-path="url(#locb1l)"><polygon points="501.4,605.8 633.8,632.2 641.5,584.4 511.4,557.4" fill="#5aff5a"/></g><g clip-path="url(#locb2l)"><polygon points="638.2,633.3 874.8,648.0 877.6,599.1 641.5,584.7" fill="#5aff5a"/></g><polygon points="501.4,118.4 633.8,92.0 641.5,139.8 511.4,166.8" fill="none" stroke="#ffa500" stroke-width="1.5" stroke-linejoin="round"/><polygon points="638.2,90.9 874.8,76.2 877.6,125.1 641.5,139.5" fill="none" stroke="#ffa500" stroke-width="1.5" stroke-linejoin="round"/><polygon points="501.4,605.8 633.8,632.2 641.5,584.4 511.4,557.4" fill="none" stroke="#ffa500" stroke-width="1.5" stroke-linejoin="round"/><polygon points="638.2,633.3 874.8,648.0 877.6,599.1 641.5,584.7" fill="none" stroke="#ffa500" stroke-width="1.5" stroke-linejoin="round"/><path d="M613.3 356.7L603.8 349.3M633.6 356.5L624.5 350.0M653.9 356.3L645.4 350.6M674.2 356.0L665.4 350.5M694.5 355.8L685.4 350.5M714.7 355.5L703.4 349.3M735.0 355.3L723.5 349.3M755.3 355.1L745.5 350.3M775.6 354.8L765.6 350.2M795.9 354.6L785.1 349.8M816.2 354.4L805.4 349.8M836.4 354.1L826.5 350.1M856.7 353.9L846.5 349.9M877.0 353.7L866.7 349.9M897.3 353.4L887.1 349.8M917.6 353.2L905.6 349.1M937.9 352.9L925.6 348.9M609.5 335.4L599.8 328.5M629.6 334.2L621.4 328.9M649.8 333.0L640.0 327.2M669.9 331.9L659.6 326.2M690.0 330.7L680.2 325.7M710.1 329.5L700.2 324.7M730.2 328.3L719.6 323.5M750.3 327.2L739.3 322.5M770.5 326.0L759.8 321.7M790.6 324.8L781.2 321.2M810.7 323.6L799.6 319.7M830.8 322.5L820.7 319.0M850.9 321.3L840.6 318.0M871.1 320.1L859.7 316.6M891.2 318.9L880.9 315.9M911.3 317.8L899.6 314.5M931.4 316.6L921.6 314.0M605.7 314.1L596.3 308.2M625.7 311.9L616.5 306.7M645.6 309.8L635.0 304.3M665.6 307.7L655.6 302.9M685.5 305.6L674.8 300.8M705.5 303.5L694.9 299.1M725.4 301.4L716.5 298.0M745.4 299.3L736.5 296.1M765.3 297.1L755.8 294.0M785.3 295.0L776.2 292.2M805.2 292.9L796.4 290.3M825.2 290.8L816.0 288.3M845.1 288.7L835.4 286.2M865.1 286.6L853.8 283.8M885.0 284.5L876.1 282.4M905.0 282.4L895.6 280.3M925.0 280.2L916.2 278.4M601.9 292.7L593.6 288.2M621.7 289.7L612.3 285.0M641.5 286.6L631.6 282.2M661.3 283.6L652.6 280.0M681.1 280.5L670.8 276.7M700.9 277.5L690.4 273.9M720.6 274.4L710.2 271.2M740.4 271.4L731.4 268.8M760.2 268.3L751.7 266.1M780.0 265.3L770.9 263.0M799.8 262.2L790.2 260.0M819.6 259.2L808.8 256.9M839.4 256.1L830.4 254.4M859.1 253.1L849.2 251.3M878.9 250.0L869.4 248.4M898.7 247.0L890.2 245.6M918.5 243.9L908.3 242.4M598.1 271.4L589.7 267.5M617.8 267.4L607.8 263.3M637.4 263.4L628.3 260.1M657.0 259.4L648.4 256.6M676.6 255.4L666.2 252.4M696.2 251.4L686.0 248.7M715.9 247.4L706.8 245.3M735.5 243.5L727.3 241.7M755.1 239.5L745.7 237.6M774.7 235.5L764.5 233.7M794.3 231.5L785.6 230.1M814.0 227.5L804.5 226.2M833.6 223.5L825.3 222.5M853.2 219.5L844.2 218.5M872.8 215.5L863.9 214.6M892.4 211.5L883.4 210.7M912.1 207.6L903.3 206.9M594.3 250.0L584.5 246.4M613.8 245.1L604.1 242.0M633.2 240.2L624.0 237.6M652.7 235.3L644.4 233.2M672.1 230.3L663.5 228.5M691.6 225.4L682.3 223.7M711.1 220.5L702.1 219.0M730.5 215.5L721.5 214.3M750.0 210.6L740.9 209.5M769.4 205.7L760.1 204.7M788.9 200.8L780.6 200.1M808.3 195.8L798.8 195.2M827.8 190.9L819.3 190.4M847.2 186.0L839.6 185.6M866.7 181.1L857.3 180.7M886.1 176.1L877.4 175.9M905.6 171.2L896.3 171.1M590.5 228.7L581.8 226.2M609.8 222.8L600.1 220.5M629.1 217.0L620.1 215.2M648.4 211.1L639.9 209.7M667.7 205.2L658.7 204.0M687.0 199.4L678.6 198.5M706.3 193.5L698.5 192.8M725.6 187.6L715.9 187.0M744.8 181.8L737.3 181.4M764.1 175.9L756.5 175.7M783.4 170.0L774.4 169.9M802.7 164.2L793.6 164.2M822.0 158.3L814.8 158.4M841.3 152.4L833.4 152.6M860.6 146.6L852.4 146.9M879.9 140.7L871.4 141.1M899.2 134.9L891.6 135.3M586.7 207.4L577.0 205.5M605.9 200.6L597.1 199.2M625.0 193.8L617.1 192.9M644.1 187.0L635.9 186.3M663.2 180.1L655.2 179.7M682.3 173.3L674.3 173.1M701.5 166.5L694.3 166.5M720.6 159.7L713.1 159.8M739.7 152.9L732.5 153.2M758.8 146.1L751.0 146.5M778.0 139.3L770.2 139.8M797.1 132.5L789.8 133.1M816.2 125.7L808.4 126.4M835.3 118.9L828.8 119.6M854.5 112.1L846.8 112.9M873.6 105.3L867.1 106.1M892.7 98.5L885.2 99.4M610.4 383.8L601.2 375.5M630.6 384.7L620.7 376.4M650.7 385.7L639.2 376.6M670.9 386.6L659.0 377.9M691.1 387.6L681.6 381.1M711.2 388.5L700.2 381.3M731.4 389.5L721.6 383.4M751.5 390.4L740.4 383.9M771.7 391.4L760.7 385.2M791.8 392.3L780.1 386.0M812.0 393.3L799.6 386.9M832.1 394.2L820.8 388.6M852.3 395.2L839.6 389.1M872.5 396.1L859.3 390.1M892.6 397.1L879.7 391.4M912.8 398.0L900.4 392.8M932.9 399.0L919.6 393.5M606.6 405.4L596.1 394.9M626.6 407.3L617.4 398.7M646.6 409.2L636.7 400.6M666.5 411.1L655.9 402.4M686.5 413.0L675.3 404.3M706.5 414.9L694.7 406.2M726.5 416.8L715.2 408.9M746.5 418.7L734.4 410.6M766.5 420.6L755.6 413.7M786.5 422.5L774.0 414.9M806.5 424.4L794.9 417.6M826.4 426.4L813.6 419.0M846.4 428.3L835.6 422.3M866.4 430.2L853.3 423.2M886.4 432.1L875.5 426.5M906.4 434.0L893.3 427.4M926.4 435.9L914.4 430.1M602.7 427.1L593.5 416.8M622.5 429.9L613.6 420.6M642.4 432.8L633.6 424.2M662.2 435.6L650.6 425.0M682.0 438.5L672.1 429.9M701.8 441.3L690.7 432.1M721.6 444.2L709.2 434.4M741.5 447.1L730.0 438.4M761.3 449.9L750.5 442.1M781.1 452.8L770.7 445.6M800.9 455.6L789.1 447.7M820.7 458.5L809.1 450.9M840.6 461.3L829.8 454.6M860.4 464.2L849.1 457.4M880.2 467.0L866.3 458.8M900.0 469.9L887.6 462.8M919.8 472.8L907.4 465.8M598.9 448.7L590.9 438.9M618.5 452.5L609.6 442.3M638.2 456.3L628.9 446.4M657.8 460.1L648.0 450.1M677.5 463.9L666.1 453.0M697.1 467.8L685.1 456.7M716.8 471.6L707.0 463.0M736.4 475.4L724.4 465.2M756.1 479.2L745.8 470.9M775.7 483.0L764.0 473.9M795.4 486.8L782.6 477.2M815.0 490.6L802.3 481.4M834.7 494.4L822.6 485.9M854.3 498.2L842.7 490.3M874.0 502.0L862.2 494.2M893.6 505.8L880.9 497.6M913.3 509.6L901.6 502.3M595.0 470.4L586.8 459.4M614.5 475.1L604.4 462.4M634.0 479.9L624.6 468.8M653.5 484.6L643.9 473.9M672.9 489.4L661.4 477.1M692.4 494.2L681.4 483.0M711.9 498.9L701.6 488.9M731.4 503.7L720.3 493.4M750.9 508.5L738.3 497.2M770.4 513.2L758.0 502.5M789.8 518.0L777.6 507.7M809.3 522.7L795.8 511.8M828.8 527.5L814.9 516.6M848.3 532.3L836.8 523.5M867.8 537.0L853.5 526.4M887.3 541.8L873.4 531.7M906.8 546.5L895.1 538.3M591.2 492.0L581.7 478.2M610.5 497.7L602.3 486.6M629.8 503.4L619.9 490.7M649.1 509.2L639.3 497.1M668.4 514.9L659.0 503.9M687.7 520.6L677.8 509.5M707.0 526.3L695.8 514.4M726.4 532.0L716.0 521.4M745.7 537.7L733.7 525.9M765.0 543.4L753.3 532.3M784.3 549.1L773.1 538.8M803.6 554.9L792.3 544.7M822.9 560.6L810.8 550.0M842.3 566.3L828.7 554.8M861.6 572.0L849.7 562.2M880.9 577.7L866.8 566.4M900.2 583.4L886.1 572.3M587.3 513.7L579.0 500.6M606.4 520.3L597.9 507.6M625.6 527.0L617.3 515.3M644.7 533.7L634.0 519.4M663.9 540.3L655.1 529.2M683.0 547.0L671.7 533.3M702.2 553.7L690.4 540.0M721.3 560.3L709.2 546.7M740.5 567.0L728.7 554.4M759.6 573.7L748.6 562.1M778.8 580.3L767.6 569.1M797.9 587.0L787.0 576.3M817.1 593.7L805.2 582.3M836.2 600.3L823.8 588.8M855.4 607.0L843.0 595.7M874.5 613.6L862.0 602.5M893.7 620.3L880.8 609.2M552.0 352.0L546.1 346.0M568.3 351.8L560.5 344.6M584.5 351.7L576.5 344.8M546.9 332.7L539.3 325.6M563.0 332.3L555.6 325.9M579.2 331.8L572.9 326.8M541.7 313.5L534.6 307.4M557.8 312.7L551.2 307.6M573.9 312.0L565.7 306.1M536.6 294.3L529.8 289.0M552.6 293.2L546.0 288.6M568.6 292.1L560.7 287.1M531.5 275.0L524.8 270.5M547.4 273.6L539.7 269.0M563.3 272.3L555.5 268.0M526.4 255.8L520.1 252.2M542.2 254.1L534.0 249.9M558.0 252.4L551.1 249.2M521.2 236.5L514.1 233.2M537.0 234.6L530.2 231.8M552.7 232.6L545.1 229.8M516.1 217.3L508.6 214.7M531.8 215.0L524.9 212.9M547.5 212.7L539.7 210.7M511.0 198.1L504.3 196.5M526.6 195.5L519.3 194.1M542.2 192.9L534.1 191.6M505.8 178.8L498.3 178.1M521.3 175.9L515.1 175.5M536.9 173.0L529.3 172.7M550.4 382.0L543.0 373.3M566.6 382.2L557.5 372.3M582.8 382.5L574.7 374.2M545.4 400.2L538.4 391.0M561.6 400.8L554.5 392.2M577.7 401.3L570.1 392.8M540.4 418.5L533.8 408.8M556.5 419.3L548.7 408.8M572.6 420.2L565.0 410.7M535.5 436.8L529.0 426.3M551.5 437.9L544.1 427.0M567.5 439.0L560.0 428.8M530.5 455.0L524.7 444.6M546.4 456.5L539.6 445.4M562.3 457.9L554.1 445.5M525.5 473.3L519.5 461.6M541.4 475.0L533.8 461.6M557.2 476.7L549.7 464.4M520.6 491.6L514.0 477.6M536.3 493.6L530.1 481.4M552.1 495.6L545.8 484.4M515.6 509.8L509.8 496.2M531.3 512.1L525.0 498.8M546.9 514.4L541.0 502.8M510.6 528.1L504.7 513.0M526.2 530.7L519.9 516.2M541.8 533.3L536.1 521.3M505.7 546.3L500.6 532.4M521.2 549.2L515.8 535.8M536.7 552.1L530.2 537.3M971.5 348.4L960.5 345.0M990.4 348.4L977.5 344.6M967.4 324.6L956.1 321.6M986.4 324.7L976.0 322.0M963.3 300.9L950.9 298.0M982.4 301.0L970.5 298.3M959.2 277.1L949.4 275.2M978.5 277.3L967.2 275.2M955.1 253.4L944.4 251.7M974.5 253.6L964.2 252.1M951.0 229.6L940.6 228.5M970.5 229.9L959.8 228.8M946.9 205.9L938.0 205.2M966.5 206.2L957.8 205.6M942.8 182.1L933.7 181.8M962.6 182.5L953.0 182.2M938.7 158.4L929.3 158.5M958.6 158.8L949.8 158.9M934.6 134.6L927.0 135.0M954.6 135.1L945.8 135.6M930.5 110.9L921.6 111.7M950.6 111.5L942.0 112.2M970.0 387.8L955.3 382.3M989.0 387.7L974.8 382.6M966.1 410.4L953.3 405.2M985.1 410.3L971.6 404.9M962.1 433.1L949.2 427.3M981.3 432.9L969.1 427.6M958.1 455.8L942.6 448.1M977.5 455.6L964.6 449.4M954.2 478.4L939.9 470.8M973.6 478.2L958.0 470.1M950.2 501.1L934.5 492.1M969.8 500.8L954.9 492.5M946.2 523.8L932.7 515.4M965.9 523.4L951.9 515.0M942.2 546.4L928.9 537.6M962.1 546.0L946.2 535.8M938.3 569.1L921.9 557.5M958.2 568.6L944.2 559.0M934.3 591.7L921.0 581.7M954.4 591.2L939.5 580.4M930.3 614.4L916.7 603.6M950.5 613.8L937.6 603.9M584.8 185.8L577.9 185.1M607.3 178.3L600.1 177.9M629.8 170.8L622.9 170.6M652.3 163.3L645.9 163.3M674.8 155.8L667.8 156.0M697.2 148.3L690.8 148.6M719.7 140.8L713.0 141.2M742.2 133.2L735.6 133.8M764.7 125.7L758.1 126.4M787.2 118.2L781.8 118.8M809.7 110.7L804.1 111.4M832.2 103.2L826.9 103.9M854.7 95.7L849.2 96.5M877.2 88.2L871.2 89.1M577.5 171.1L571.2 170.9M600.0 164.3L594.0 164.3M622.6 157.4L615.4 157.6M645.1 150.6L638.0 151.0M667.6 143.8L661.2 144.2M690.1 136.9L684.1 137.4M712.6 130.1L705.9 130.7M735.2 123.2L728.6 124.0M757.7 116.4L751.7 117.1M780.2 109.5L774.6 110.3M802.7 102.7L797.2 103.5M825.3 95.9L819.6 96.7M847.8 89.0L841.1 90.1M870.3 82.2L863.8 83.2M585.9 536.1L575.6 518.6M608.4 543.7L598.0 527.4M630.9 551.3L619.4 534.5M653.4 559.0L642.4 543.9M675.9 566.6L664.8 552.2M698.3 574.2L687.5 560.8M720.8 581.8L709.8 568.8M743.3 589.4L730.8 575.3M765.8 597.0L754.0 584.2M788.3 604.6L773.8 589.5M810.8 612.3L796.3 597.7M833.2 619.9L817.7 604.7M855.7 627.5L839.8 612.4M878.2 635.1L865.0 622.9M578.1 551.9L570.2 537.4M600.6 558.8L590.6 542.0M623.1 565.7L613.4 550.5M645.6 572.6L634.1 555.7M668.1 579.5L657.0 564.1M690.7 586.4L679.5 571.8M713.2 593.3L701.4 578.7M735.7 600.2L721.8 583.7M758.2 607.1L745.3 592.5M780.7 614.0L767.7 599.8M803.3 620.9L790.4 607.5M825.8 627.8L810.5 612.4M848.3 634.7L835.1 621.7M870.8 641.6L858.1 629.5M530.1 149.1L523.7 149.7M549.3 145.1L543.6 145.7M568.5 141.2L562.0 141.9M587.6 137.3L581.6 138.0M606.8 133.3L600.9 134.1M626.0 129.4L620.1 130.2M526.7 132.1L521.3 133.2M546.0 128.2L539.9 129.5M565.3 124.3L560.4 125.3M584.6 120.4L578.6 121.7M603.9 116.5L597.9 117.7M623.2 112.6L617.8 113.7M660.7 124.1L654.3 124.9M680.9 122.8L675.2 123.6M701.1 121.6L694.5 122.4M721.3 120.3L714.7 121.2M741.4 119.1L735.4 119.8M761.6 117.9L756.0 118.5M781.8 116.6L775.2 117.4M802.0 115.4L796.3 116.0M822.2 114.1L816.7 114.8M842.4 112.9L835.6 113.6M862.6 111.7L855.8 112.4M659.5 107.0L652.9 108.3M679.7 105.8L673.9 106.9M699.9 104.5L694.6 105.5M720.2 103.3L714.9 104.2M740.4 102.0L734.1 103.1M760.6 100.8L754.6 101.8M780.8 99.6L774.9 100.5M801.0 98.3L795.1 99.2M821.2 97.1L815.3 97.9M841.4 95.8L834.8 96.8M861.6 94.6L855.1 95.5M530.6 572.7L523.0 553.9M549.7 576.7L542.3 559.8M568.9 580.6L559.4 561.0M588.1 584.5L578.6 566.5M607.2 588.5L597.2 570.7M626.4 592.4L616.4 575.9M526.9 590.8L519.8 571.8M546.2 594.8L539.1 577.6M565.5 598.7L556.1 578.1M584.8 602.6L576.3 585.5M604.1 606.5L593.5 586.7M623.4 610.4L611.8 590.3M660.8 597.7L647.7 578.3M681.0 599.0L669.0 582.3M701.2 600.2L686.8 581.3M721.4 601.4L708.8 585.9M741.6 602.7L728.1 586.9M761.8 603.9L748.1 588.7M782.0 605.1L766.5 588.7M802.2 606.4L788.3 592.3M822.3 607.6L808.2 593.8M842.5 608.9L825.7 593.1M862.7 610.1L846.6 595.6M659.6 616.0L648.4 598.7M679.8 617.2L666.7 598.2M700.0 618.4L687.2 601.0M720.2 619.7L707.6 603.4M740.4 620.9L727.3 604.9M760.6 622.2L747.8 607.3M780.8 623.4L767.3 608.4M801.0 624.7L786.5 609.2M821.2 625.9L805.6 610.1M841.4 627.2L824.8 610.9M861.6 628.4L844.4 612.3" stroke="#1494ff" stroke-width="1.4" fill="none"/><path d="M603.8 349.3L608.6 350.7L606.4 353.6ZM624.5 350.0L629.3 351.2L627.2 354.1ZM645.4 350.6L650.2 351.6L648.2 354.6ZM665.4 350.5L670.2 351.4L668.3 354.5ZM685.4 350.5L690.3 351.3L688.5 354.4ZM703.4 349.3L708.3 350.0L706.6 353.1ZM723.5 349.3L728.4 349.9L726.8 353.1ZM745.5 350.3L750.4 350.7L748.8 353.9ZM765.6 350.2L770.6 350.5L769.0 353.8ZM785.1 349.8L790.0 350.0L788.6 353.3ZM805.4 349.8L810.3 349.9L808.9 353.3ZM826.5 350.1L831.5 350.2L830.1 353.5ZM846.5 349.9L851.4 349.9L850.1 353.3ZM866.7 349.9L871.7 349.8L870.4 353.1ZM887.1 349.8L892.1 349.7L890.9 353.0ZM905.6 349.1L910.6 348.9L909.4 352.3ZM925.6 348.9L930.5 348.6L929.4 352.0ZM599.8 328.5L604.6 329.7L602.5 332.6ZM621.4 328.9L626.2 329.8L624.2 332.9ZM640.0 327.2L644.9 328.0L643.0 331.1ZM659.6 326.2L664.5 326.9L662.8 330.0ZM680.2 325.7L685.1 326.2L683.5 329.4ZM700.2 324.7L705.1 325.1L703.5 328.4ZM719.6 323.5L724.5 323.8L723.1 327.1ZM739.3 322.5L744.3 322.6L742.9 325.9ZM759.8 321.7L764.7 321.7L763.4 325.1ZM781.2 321.2L786.1 321.2L784.8 324.6ZM799.6 319.7L804.6 319.5L803.4 322.9ZM820.7 319.0L825.6 318.8L824.5 322.2ZM840.6 318.0L845.6 317.7L844.5 321.1ZM859.7 316.6L864.7 316.3L863.6 319.7ZM880.9 315.9L885.8 315.5L884.8 319.0ZM899.6 314.5L904.5 314.0L903.5 317.4ZM921.6 314.0L926.5 313.4L925.6 316.9ZM596.3 308.2L601.2 309.1L599.3 312.1ZM616.5 306.7L621.4 307.4L619.6 310.5ZM635.0 304.3L639.9 304.8L638.2 308.0ZM655.6 302.9L660.5 303.3L659.0 306.5ZM674.8 300.8L679.7 301.0L678.2 304.3ZM694.9 299.1L699.8 299.2L698.5 302.5ZM716.5 298.0L721.5 297.9L720.2 301.3ZM736.5 296.1L741.5 296.0L740.3 299.3ZM755.8 294.0L760.7 293.7L759.5 297.1ZM776.2 292.2L781.1 291.8L780.0 295.3ZM796.4 290.3L801.3 289.9L800.3 293.4ZM816.0 288.3L821.0 287.8L820.0 291.2ZM835.4 286.2L840.3 285.6L839.4 289.1ZM853.8 283.8L858.7 283.2L857.8 286.7ZM876.1 282.4L881.0 281.7L880.1 285.2ZM895.6 280.3L900.4 279.5L899.7 283.0ZM916.2 278.4L921.0 277.6L920.3 281.1ZM593.6 288.2L598.5 288.8L596.8 291.9ZM612.3 285.0L617.2 285.5L615.6 288.7ZM631.6 282.2L636.5 282.4L635.0 285.7ZM652.6 280.0L657.5 280.1L656.1 283.4ZM670.8 276.7L675.7 276.6L674.5 280.0ZM690.4 273.9L695.4 273.7L694.2 277.1ZM710.2 271.2L715.1 270.8L714.1 274.2ZM731.4 268.8L736.3 268.3L735.3 271.8ZM751.7 266.1L756.6 265.5L755.7 269.0ZM770.9 263.0L775.8 262.4L774.9 265.9ZM790.2 260.0L795.1 259.3L794.3 262.8ZM808.8 256.9L813.7 256.1L812.9 259.6ZM830.4 254.4L835.3 253.5L834.6 257.0ZM849.2 251.3L854.1 250.3L853.4 253.9ZM869.4 248.4L874.2 247.4L873.6 250.9ZM890.2 245.6L895.0 244.6L894.5 248.1ZM908.3 242.4L913.1 241.3L912.6 244.9ZM589.7 267.5L594.7 267.8L593.2 271.1ZM607.8 263.3L612.7 263.4L611.3 266.7ZM628.3 260.1L633.2 260.0L632.0 263.3ZM648.4 256.6L653.3 256.3L652.2 259.7ZM666.2 252.4L671.1 251.9L670.1 255.4ZM686.0 248.7L690.9 248.2L690.0 251.7ZM706.8 245.3L711.7 244.6L710.9 248.1ZM727.3 241.7L732.1 240.9L731.4 244.4ZM745.7 237.6L750.5 236.7L749.9 240.3ZM764.5 233.7L769.3 232.7L768.7 236.3ZM785.6 230.1L790.5 229.1L789.9 232.6ZM804.5 226.2L809.3 225.0L808.8 228.6ZM825.3 222.5L830.1 221.2L829.6 224.8ZM844.2 218.5L848.9 217.2L848.5 220.8ZM863.9 214.6L868.7 213.3L868.3 216.9ZM883.4 210.7L888.1 209.3L887.8 212.9ZM903.3 206.9L908.0 205.4L907.7 209.0ZM584.5 246.4L589.5 246.3L588.2 249.7ZM604.1 242.0L609.0 241.7L607.9 245.1ZM624.0 237.6L628.9 237.1L628.0 240.6ZM644.4 233.2L649.3 232.6L648.5 236.1ZM663.5 228.5L668.4 227.7L667.6 231.2ZM682.3 223.7L687.2 222.7L686.5 226.3ZM702.1 219.0L706.9 218.0L706.4 221.5ZM721.5 214.3L726.3 213.1L725.8 216.7ZM740.9 209.5L745.7 208.3L745.3 211.9ZM760.1 204.7L764.8 203.4L764.5 207.0ZM780.6 200.1L785.3 198.7L785.0 202.2ZM798.8 195.2L803.5 193.7L803.3 197.3ZM819.3 190.4L824.0 188.9L823.7 192.5ZM839.6 185.6L844.3 184.0L844.1 187.6ZM857.3 180.7L862.0 179.1L861.9 182.7ZM877.4 175.9L882.0 174.2L882.0 177.8ZM896.3 171.1L900.9 169.3L900.9 172.9ZM581.8 226.2L586.7 225.7L585.7 229.2ZM600.1 220.5L605.0 219.8L604.1 223.3ZM620.1 215.2L625.0 214.3L624.3 217.8ZM639.9 209.7L644.7 208.7L644.1 212.2ZM658.7 204.0L663.5 202.9L663.0 206.4ZM678.6 198.5L683.4 197.2L683.0 200.7ZM698.5 192.8L703.3 191.4L703.0 195.0ZM715.9 187.0L720.6 185.5L720.4 189.1ZM737.3 181.4L742.0 179.8L741.9 183.4ZM756.5 175.7L761.2 174.0L761.1 177.6ZM774.4 169.9L779.1 168.2L779.0 171.8ZM793.6 164.2L798.2 162.4L798.2 166.0ZM814.8 158.4L819.3 156.6L819.4 160.2ZM833.4 152.6L838.0 150.7L838.1 154.3ZM852.4 146.9L856.9 144.9L857.1 148.5ZM871.4 141.1L875.9 139.1L876.0 142.7ZM891.6 135.3L896.1 133.2L896.3 136.8ZM577.0 205.5L581.8 204.6L581.1 208.1ZM597.1 199.2L601.9 198.1L601.3 201.7ZM617.1 192.9L621.8 191.6L621.4 195.2ZM635.9 186.3L640.7 184.9L640.4 188.5ZM655.2 179.7L659.9 178.2L659.7 181.8ZM674.3 173.1L679.0 171.5L678.9 175.0ZM694.3 166.5L698.9 164.7L698.8 168.3ZM713.1 159.8L717.7 158.0L717.7 161.6ZM732.5 153.2L737.1 151.2L737.2 154.8ZM751.0 146.5L755.5 144.5L755.7 148.1ZM770.2 139.8L774.7 137.7L774.9 141.3ZM789.8 133.1L794.2 130.9L794.5 134.5ZM808.4 126.4L812.9 124.2L813.2 127.8ZM828.8 119.6L833.2 117.3L833.6 120.9ZM846.8 112.9L851.1 110.7L851.5 114.2ZM867.1 106.1L871.5 103.7L871.9 107.3ZM885.2 99.4L889.5 97.1L890.0 100.7ZM601.2 375.5L605.9 377.2L603.5 379.9ZM620.7 376.4L625.4 378.0L623.1 380.8ZM639.2 376.6L643.9 378.0L641.7 380.9ZM659.0 377.9L663.8 379.2L661.7 382.1ZM681.6 381.1L686.4 382.2L684.4 385.2ZM700.2 381.3L705.0 382.3L703.1 385.4ZM721.6 383.4L726.4 384.3L724.6 387.4ZM740.4 383.9L745.3 384.7L743.5 387.8ZM760.7 385.2L765.6 385.9L763.9 389.1ZM780.1 386.0L785.0 386.6L783.3 389.8ZM799.6 386.9L804.5 387.4L802.8 390.6ZM820.8 388.6L825.7 389.0L824.1 392.3ZM839.6 389.1L844.5 389.5L843.0 392.8ZM859.3 390.1L864.3 390.4L862.8 393.7ZM879.7 391.4L884.6 391.6L883.2 394.9ZM900.4 392.8L905.4 392.9L904.0 396.2ZM919.6 393.5L924.6 393.6L923.2 396.9ZM596.1 394.9L600.6 396.9L598.1 399.4ZM617.4 398.7L622.0 400.5L619.5 403.2ZM636.7 400.6L641.4 402.3L639.0 405.0ZM655.9 402.4L660.6 403.9L658.3 406.7ZM675.3 404.3L680.0 405.7L677.8 408.5ZM694.7 406.2L699.5 407.5L697.3 410.4ZM715.2 408.9L720.0 410.1L717.9 413.0ZM734.4 410.6L739.2 411.7L737.2 414.7ZM755.6 413.7L760.4 414.6L758.5 417.7ZM774.0 414.9L778.9 415.7L777.0 418.8ZM794.9 417.6L799.8 418.4L797.9 421.5ZM813.6 419.0L818.5 419.7L816.7 422.9ZM835.6 422.3L840.5 422.9L838.7 426.1ZM853.3 423.2L858.2 423.8L856.6 427.0ZM875.5 426.5L880.4 427.0L878.8 430.2ZM893.3 427.4L898.2 427.9L896.6 431.1ZM914.4 430.1L919.3 430.5L917.8 433.7ZM593.5 416.8L597.9 419.0L595.3 421.4ZM613.6 420.6L618.1 422.7L615.5 425.2ZM633.6 424.2L638.1 426.1L635.6 428.7ZM650.6 425.0L655.2 426.8L652.8 429.4ZM672.1 429.9L676.8 431.6L674.4 434.3ZM690.7 432.1L695.4 433.7L693.1 436.5ZM709.2 434.4L713.9 435.8L711.7 438.6ZM730.0 438.4L734.8 439.8L732.6 442.6ZM750.5 442.1L755.3 443.3L753.1 446.2ZM770.7 445.6L775.5 446.7L773.5 449.7ZM789.1 447.7L793.9 448.8L791.9 451.7ZM809.1 450.9L813.9 451.9L812.0 454.9ZM829.8 454.6L834.7 455.5L832.8 458.6ZM849.1 457.4L854.0 458.2L852.1 461.3ZM866.3 458.8L871.2 459.6L869.3 462.7ZM887.6 462.8L892.5 463.5L890.7 466.6ZM907.4 465.8L912.3 466.5L910.6 469.6ZM590.9 438.9L595.2 441.3L592.4 443.6ZM609.6 442.3L614.0 444.6L611.3 446.9ZM628.9 446.4L633.4 448.5L630.7 451.0ZM648.0 450.1L652.5 452.1L649.9 454.7ZM666.1 453.0L670.7 454.9L668.2 457.5ZM685.1 456.7L689.7 458.5L687.3 461.2ZM707.0 463.0L711.6 464.6L709.3 467.4ZM724.4 465.2L729.0 466.8L726.7 469.6ZM745.8 470.9L750.6 472.4L748.3 475.2ZM764.0 473.9L768.8 475.3L766.5 478.1ZM782.6 477.2L787.4 478.5L785.2 481.4ZM802.3 481.4L807.1 482.6L805.0 485.5ZM822.6 485.9L827.4 487.1L825.4 490.0ZM842.7 490.3L847.5 491.4L845.5 494.3ZM862.2 494.2L867.0 495.2L865.0 498.2ZM880.9 497.6L885.7 498.6L883.8 501.6ZM901.6 502.3L906.5 503.2L904.5 506.2ZM586.8 459.4L591.0 462.0L588.1 464.1ZM604.4 462.4L608.6 464.9L605.8 467.1ZM624.6 468.8L628.9 471.1L626.2 473.4ZM643.9 473.9L648.3 476.2L645.6 478.6ZM661.4 477.1L665.8 479.2L663.2 481.7ZM681.4 483.0L685.9 485.0L683.4 487.6ZM701.6 488.9L706.2 490.8L703.7 493.4ZM720.3 493.4L724.9 495.2L722.5 497.8ZM738.3 497.2L742.9 498.9L740.5 501.6ZM758.0 502.5L762.6 504.2L760.3 506.9ZM777.6 507.7L782.3 509.3L780.0 512.1ZM795.8 511.8L800.5 513.3L798.2 516.1ZM814.9 516.6L819.6 518.0L817.4 520.8ZM836.8 523.5L841.5 524.8L839.4 527.7ZM853.5 526.4L858.3 527.7L856.1 530.6ZM873.4 531.7L878.2 532.9L876.0 535.9ZM895.1 538.3L899.9 539.5L897.8 542.4ZM581.7 478.2L585.8 481.0L582.8 483.0ZM602.3 486.6L606.5 489.3L603.6 491.4ZM619.9 490.7L624.1 493.2L621.3 495.4ZM639.3 497.1L643.6 499.5L640.8 501.8ZM659.0 503.9L663.4 506.2L660.6 508.6ZM677.8 509.5L682.2 511.8L679.5 514.2ZM695.8 514.4L700.3 516.5L697.7 519.0ZM716.0 521.4L720.5 523.5L717.9 526.0ZM733.7 525.9L738.2 527.9L735.7 530.4ZM753.3 532.3L757.9 534.2L755.4 536.8ZM773.1 538.8L777.7 540.6L775.3 543.3ZM792.3 544.7L796.9 546.5L794.5 549.2ZM810.8 550.0L815.4 551.7L813.1 554.4ZM828.7 554.8L833.3 556.4L831.0 559.1ZM849.7 562.2L854.4 563.8L852.1 566.5ZM866.8 566.4L871.5 567.8L869.2 570.6ZM886.1 572.3L890.8 573.7L888.6 576.6ZM579.0 500.6L583.0 503.5L579.9 505.4ZM597.9 507.6L601.9 510.4L599.0 512.4ZM617.3 515.3L621.4 518.0L618.5 520.1ZM634.0 519.4L638.2 522.0L635.3 524.2ZM655.1 529.2L659.3 531.7L656.5 533.9ZM671.7 533.3L676.0 535.7L673.3 538.0ZM690.4 540.0L694.7 542.3L692.0 544.6ZM709.2 546.7L713.6 549.0L710.9 551.4ZM728.7 554.4L733.2 556.5L730.6 558.9ZM748.6 562.1L753.1 564.2L750.5 566.7ZM767.6 569.1L772.1 571.1L769.6 573.6ZM787.0 576.3L791.5 578.2L789.0 580.8ZM805.2 582.3L809.8 584.2L807.3 586.8ZM823.8 588.8L828.4 590.6L826.0 593.3ZM843.0 595.7L847.6 597.5L845.2 600.2ZM862.0 602.5L866.6 604.2L864.2 606.9ZM880.8 609.2L885.5 610.9L883.1 613.6ZM546.1 346.0L550.6 348.0L548.0 350.5ZM560.5 344.6L565.1 346.4L562.6 349.0ZM576.5 344.8L581.2 346.4L578.8 349.1ZM539.3 325.6L543.9 327.5L541.4 330.1ZM555.6 325.9L560.3 327.5L557.9 330.3ZM572.9 326.8L577.6 328.2L575.4 331.1ZM534.6 307.4L539.3 309.1L537.0 311.8ZM551.2 307.6L555.9 309.0L553.7 311.8ZM565.7 306.1L570.5 307.3L568.4 310.3ZM529.8 289.0L534.5 290.4L532.4 293.3ZM546.0 288.6L550.8 289.8L548.8 292.7ZM560.7 287.1L565.5 288.0L563.6 291.1ZM524.8 270.5L529.6 271.6L527.6 274.6ZM539.7 269.0L544.5 269.8L542.7 272.9ZM555.5 268.0L560.4 268.6L558.6 271.8ZM520.1 252.2L525.0 252.9L523.2 256.1ZM534.0 249.9L539.0 250.4L537.3 253.6ZM551.1 249.2L556.0 249.5L554.5 252.8ZM514.1 233.2L519.0 233.5L517.5 236.8ZM530.2 231.8L535.1 231.9L533.8 235.2ZM545.1 229.8L550.0 229.7L548.8 233.0ZM508.6 214.7L513.5 214.5L512.3 217.9ZM524.9 212.9L529.8 212.5L528.8 216.0ZM539.7 210.7L544.6 210.1L543.7 213.6ZM504.3 196.5L509.2 195.8L508.4 199.3ZM519.3 194.1L524.1 193.2L523.4 196.7ZM534.1 191.6L538.9 190.5L538.3 194.1ZM498.3 178.1L503.0 176.7L502.7 180.3ZM515.1 175.5L519.8 174.0L519.5 177.6ZM529.3 172.7L534.0 171.1L533.8 174.7ZM543.0 373.3L547.4 375.6L544.6 377.9ZM557.5 372.3L561.9 374.5L559.3 376.9ZM574.7 374.2L579.2 376.2L576.6 378.8ZM538.4 391.0L542.6 393.6L539.8 395.8ZM554.5 392.2L558.8 394.6L556.0 396.9ZM570.1 392.8L574.5 395.0L571.8 397.4ZM533.8 408.8L537.9 411.6L534.9 413.7ZM548.7 408.8L552.8 411.4L550.0 413.5ZM565.0 410.7L569.3 413.2L566.5 415.4ZM529.0 426.3L532.9 429.2L529.9 431.1ZM544.1 427.0L548.2 429.8L545.2 431.8ZM560.0 428.8L564.1 431.5L561.2 433.6ZM524.7 444.6L528.5 447.8L525.4 449.5ZM539.6 445.4L543.5 448.3L540.5 450.2ZM554.1 445.5L558.1 448.3L555.1 450.3ZM519.5 461.6L523.2 464.9L520.0 466.5ZM533.8 461.6L537.7 464.7L534.5 466.5ZM549.7 464.4L553.6 467.4L550.5 469.2ZM514.0 477.6L517.6 481.0L514.4 482.6ZM530.1 481.4L533.8 484.7L530.6 486.4ZM545.8 484.4L549.6 487.6L546.5 489.3ZM509.8 496.2L513.2 499.7L509.9 501.2ZM525.0 498.8L528.6 502.2L525.3 503.7ZM541.0 502.8L544.7 506.1L541.5 507.8ZM504.7 513.0L508.1 516.6L504.7 518.0ZM519.9 516.2L523.4 519.7L520.1 521.2ZM536.1 521.3L539.7 524.7L536.5 526.2ZM500.6 532.4L503.9 536.1L500.5 537.3ZM515.8 535.8L519.2 539.4L515.8 540.7ZM530.2 537.3L533.7 540.7L530.4 542.2ZM960.5 345.0L965.4 344.6L964.3 348.1ZM977.5 344.6L982.4 344.2L981.4 347.6ZM956.1 321.6L961.0 321.1L960.1 324.5ZM976.0 322.0L980.9 321.4L980.0 324.9ZM950.9 298.0L955.8 297.3L955.0 300.8ZM970.5 298.3L975.4 297.6L974.6 301.1ZM949.4 275.2L954.2 274.3L953.6 277.9ZM967.2 275.2L972.1 274.3L971.4 277.8ZM944.4 251.7L949.2 250.7L948.7 254.2ZM964.2 252.1L969.0 251.0L968.4 254.5ZM940.6 228.5L945.4 227.2L945.0 230.8ZM959.8 228.8L964.5 227.5L964.1 231.0ZM938.0 205.2L942.7 203.8L942.5 207.4ZM957.8 205.6L962.5 204.1L962.3 207.7ZM933.7 181.8L938.3 180.2L938.2 183.8ZM953.0 182.2L957.7 180.6L957.6 184.2ZM929.3 158.5L933.8 156.6L933.9 160.2ZM949.8 158.9L954.4 157.1L954.4 160.7ZM927.0 135.0L931.5 133.0L931.7 136.6ZM945.8 135.6L950.3 133.6L950.5 137.2ZM921.6 111.7L926.1 109.5L926.4 113.1ZM942.0 112.2L946.4 110.0L946.7 113.6ZM955.3 382.3L960.3 382.2L959.0 385.6ZM974.8 382.6L979.7 382.5L978.5 385.9ZM953.3 405.2L958.3 405.3L956.9 408.6ZM971.6 404.9L976.5 405.0L975.2 408.3ZM949.2 427.3L954.1 427.5L952.6 430.8ZM969.1 427.6L974.1 427.8L972.6 431.1ZM942.6 448.1L947.6 448.5L946.0 451.8ZM964.6 449.4L969.5 449.8L968.0 453.0ZM939.9 470.8L944.8 471.4L943.1 474.6ZM958.0 470.1L962.9 470.6L961.3 473.8ZM934.5 492.1L939.4 492.8L937.6 495.9ZM954.9 492.5L959.8 493.2L958.0 496.3ZM932.7 515.4L937.5 516.3L935.7 519.3ZM951.9 515.0L956.8 515.8L954.9 518.9ZM928.9 537.6L933.8 538.6L931.8 541.6ZM946.2 535.8L951.1 536.8L949.1 539.8ZM921.9 557.5L926.7 558.7L924.6 561.6ZM944.2 559.0L949.0 560.1L947.0 563.1ZM921.0 581.7L925.7 583.0L923.6 585.9ZM939.5 580.4L944.3 581.7L942.2 584.6ZM916.7 603.6L921.5 605.0L919.2 607.8ZM937.6 603.9L942.3 605.3L940.1 608.1ZM577.9 185.1L582.7 183.8L582.3 187.4ZM600.1 177.9L604.8 176.4L604.6 180.0ZM622.9 170.6L627.5 168.9L627.4 172.5ZM645.9 163.3L650.5 161.5L650.5 165.1ZM667.8 156.0L672.4 154.0L672.5 157.6ZM690.8 148.6L695.3 146.6L695.5 150.2ZM713.0 141.2L717.5 139.1L717.7 142.7ZM735.6 133.8L740.1 131.6L740.4 135.2ZM758.1 126.4L762.5 124.1L762.8 127.7ZM781.8 118.8L786.2 116.5L786.6 120.1ZM804.1 111.4L808.4 109.0L808.9 112.6ZM826.9 103.9L831.3 101.5L831.7 105.1ZM849.2 96.5L853.5 94.0L854.0 97.6ZM871.2 89.1L875.5 86.6L876.0 90.2ZM571.2 170.9L575.8 169.3L575.7 172.9ZM594.0 164.3L598.6 162.5L598.6 166.1ZM615.4 157.6L620.0 155.7L620.1 159.3ZM638.0 151.0L642.5 148.9L642.7 152.5ZM661.2 144.2L665.6 142.1L665.9 145.7ZM684.1 137.4L688.6 135.2L688.9 138.8ZM705.9 130.7L710.3 128.5L710.7 132.1ZM728.6 124.0L733.0 121.7L733.4 125.2ZM751.7 117.1L756.0 114.8L756.5 118.4ZM774.6 110.3L778.9 107.9L779.4 111.5ZM797.2 103.5L801.5 101.1L802.0 104.6ZM819.6 96.7L823.9 94.2L824.5 97.8ZM841.1 90.1L845.4 87.6L846.0 91.1ZM863.8 83.2L868.0 80.7L868.6 84.3ZM575.6 518.6L579.5 521.6L576.4 523.5ZM598.0 527.4L602.0 530.3L599.0 532.2ZM619.4 534.5L623.5 537.3L620.5 539.3ZM642.4 543.9L646.6 546.6L643.7 548.7ZM664.8 552.2L669.0 554.7L666.2 556.9ZM687.5 560.8L691.8 563.3L689.0 565.6ZM709.8 568.8L714.1 571.1L711.4 573.5ZM730.8 575.3L735.2 577.6L732.5 580.0ZM754.0 584.2L758.4 586.4L755.8 588.8ZM773.8 589.5L778.3 591.6L775.7 594.1ZM796.3 597.7L800.8 599.7L798.3 602.2ZM817.7 604.7L822.3 606.7L819.8 609.2ZM839.8 612.4L844.4 614.3L841.9 616.9ZM865.0 622.9L869.6 624.7L867.1 627.3ZM570.2 537.4L573.9 540.6L570.8 542.3ZM590.6 542.0L594.5 545.0L591.4 546.9ZM613.4 550.5L617.4 553.4L614.4 555.4ZM634.1 555.7L638.2 558.5L635.2 560.5ZM657.0 564.1L661.2 566.8L658.2 568.9ZM679.5 571.8L683.7 574.3L680.8 576.5ZM701.4 578.7L705.7 581.1L702.9 583.4ZM721.8 583.7L726.1 586.1L723.3 588.4ZM745.3 592.5L749.7 594.7L747.0 597.1ZM767.7 599.8L772.2 602.0L769.5 604.4ZM790.4 607.5L794.9 609.5L792.3 612.0ZM810.5 612.4L815.1 614.4L812.5 616.9ZM835.1 621.7L839.6 623.7L837.1 626.2ZM858.1 629.5L862.7 631.4L860.2 634.0ZM523.7 149.7L528.1 147.4L528.5 151.0ZM543.6 145.7L548.0 143.5L548.4 147.0ZM562.0 141.9L566.3 139.6L566.8 143.2ZM581.6 138.0L585.9 135.7L586.4 139.2ZM600.9 134.1L605.3 131.7L605.7 135.3ZM620.1 130.2L624.4 127.8L624.9 131.4ZM521.3 133.2L525.4 130.6L526.1 134.1ZM539.9 129.5L544.0 126.8L544.7 130.3ZM560.4 125.3L564.6 122.6L565.3 126.2ZM578.6 121.7L582.7 119.0L583.4 122.5ZM597.9 117.7L602.1 115.1L602.8 118.6ZM617.8 113.7L621.9 111.1L622.7 114.6ZM654.3 124.9L658.6 122.5L659.1 126.1ZM675.2 123.6L679.6 121.2L680.0 124.7ZM694.5 122.4L698.8 120.0L699.3 123.6ZM714.7 121.2L719.0 118.8L719.5 122.4ZM735.4 119.8L739.7 117.5L740.1 121.1ZM756.0 118.5L760.4 116.2L760.8 119.8ZM775.2 117.4L779.5 115.1L780.0 118.6ZM796.3 116.0L800.7 113.7L801.1 117.3ZM816.7 114.8L821.0 112.5L821.4 116.0ZM835.6 113.6L840.0 111.4L840.4 114.9ZM855.8 112.4L860.2 110.1L860.6 113.7ZM652.9 108.3L657.0 105.7L657.7 109.2ZM673.9 106.9L678.1 104.3L678.8 107.8ZM694.6 105.5L698.8 102.9L699.4 106.5ZM714.9 104.2L719.1 101.6L719.7 105.2ZM734.1 103.1L738.3 100.6L738.9 104.1ZM754.6 101.8L758.9 99.2L759.5 102.8ZM774.9 100.5L779.2 98.0L779.8 101.5ZM795.1 99.2L799.4 96.7L799.9 100.3ZM815.3 97.9L819.6 95.5L820.1 99.0ZM834.8 96.8L839.1 94.3L839.6 97.9ZM855.1 95.5L859.4 93.1L859.9 96.6ZM523.0 553.9L526.4 557.5L523.1 558.9ZM542.3 559.8L545.8 563.3L542.5 564.7ZM559.4 561.0L563.0 564.3L559.8 565.9ZM578.6 566.5L582.3 569.7L579.1 571.4ZM597.2 570.7L601.0 573.9L597.9 575.6ZM616.4 575.9L620.4 578.9L617.3 580.8ZM519.8 571.8L523.1 575.5L519.7 576.8ZM539.1 577.6L542.5 581.2L539.2 582.6ZM556.1 578.1L559.7 581.5L556.4 583.0ZM576.3 585.5L580.0 588.8L576.8 590.4ZM593.5 586.7L597.2 589.9L594.1 591.6ZM611.8 590.3L615.7 593.4L612.6 595.2ZM647.7 578.3L651.7 581.1L648.7 583.1ZM669.0 582.3L673.2 585.0L670.2 587.1ZM686.8 581.3L691.0 583.9L688.1 586.1ZM708.8 585.9L713.1 588.4L710.3 590.6ZM728.1 586.9L732.5 589.2L729.7 591.6ZM748.1 588.7L752.5 590.9L749.9 593.3ZM766.5 588.7L771.0 590.8L768.3 593.3ZM788.3 592.3L792.8 594.3L790.2 596.8ZM808.2 593.8L812.7 595.8L810.2 598.3ZM825.7 593.1L830.3 594.9L827.8 597.6ZM846.6 595.6L851.2 597.3L848.8 600.0ZM648.4 598.7L652.4 601.6L649.4 603.5ZM666.7 598.2L670.8 601.0L667.8 603.0ZM687.2 601.0L691.4 603.6L688.5 605.8ZM707.6 603.4L711.9 606.0L709.0 608.2ZM727.3 604.9L731.6 607.3L728.8 609.6ZM747.8 607.3L752.2 609.6L749.5 611.9ZM767.3 608.4L771.7 610.7L769.1 613.1ZM786.5 609.2L790.9 611.3L788.3 613.8ZM805.6 610.1L810.1 612.1L807.6 614.6ZM824.8 610.9L829.3 612.8L826.8 615.4ZM844.4 612.3L849.0 614.1L846.6 616.7Z" fill="#1494ff"/><rect x="864.3000000000001" y="163.9" width="4.6" height="8.8" rx="1.2" fill="#fff"/><rect x="866.0" y="165.3" width="1.2" height="6" fill="#111"/><rect x="875.3000000000001" y="225.6" width="4.6" height="8.8" rx="1.2" fill="#fff"/><rect x="877.0" y="227" width="1.2" height="6" fill="#111"/><rect x="886.5" y="266.6" width="4.6" height="8.8" rx="1.2" fill="#fff"/><rect x="888.1999999999999" y="268" width="1.2" height="6" fill="#111"/><rect x="916.0" y="268.9" width="7.6" height="4.6" rx="1.2" fill="#fff"/><rect x="917.1999999999999" y="270.4" width="5.2" height="1.6" fill="#111"/><rect x="899.7" y="310.6" width="4.6" height="8.8" rx="1.2" fill="#fff"/><rect x="901.4" y="312" width="1.2" height="6" fill="#111"/><rect x="907.7" y="357.6" width="4.6" height="8.8" rx="1.2" fill="#fff"/><rect x="909.4" y="359" width="1.2" height="6" fill="#111"/><rect x="899.7" y="404.6" width="4.6" height="8.8" rx="1.2" fill="#fff"/><rect x="901.4" y="406" width="1.2" height="6" fill="#111"/><rect x="886.5" y="448.8" width="4.6" height="8.8" rx="1.2" fill="#fff"/><rect x="888.1999999999999" y="450.2" width="1.2" height="6" fill="#111"/><rect x="916.0" y="450.7" width="7.6" height="4.6" rx="1.2" fill="#fff"/><rect x="917.1999999999999" y="452.2" width="5.2" height="1.6" fill="#111"/><rect x="875.3000000000001" y="489.8" width="4.6" height="8.8" rx="1.2" fill="#fff"/><rect x="877.0" y="491.2" width="1.2" height="6" fill="#111"/><rect x="864.3000000000001" y="551.5" width="4.6" height="8.8" rx="1.2" fill="#fff"/><rect x="866.0" y="552.9" width="1.2" height="6" fill="#111"/><rect x="660.6" y="268.9" width="7.6" height="4.6" rx="1.2" fill="#fff"/><rect x="661.8" y="270.4" width="5.2" height="1.6" fill="#111"/><rect x="660.6" y="450.9" width="7.6" height="4.6" rx="1.2" fill="#fff"/><rect x="661.8" y="452.4" width="5.2" height="1.6" fill="#111"/><rect x="1028.2" y="138.3" width="4.2" height="9" rx="1" fill="#3a3a3a" stroke="#e8e8e8" stroke-width="1.2" transform="rotate(-35 1030.3 142.8)"/><rect x="1028.2" y="229.3" width="4.2" height="9" rx="1" fill="#3a3a3a" stroke="#e8e8e8" stroke-width="1.2" transform="rotate(-28 1030.3 233.8)"/><rect x="1028.2" y="302.5" width="4.2" height="9" rx="1" fill="#3a3a3a" stroke="#e8e8e8" stroke-width="1.2" transform="rotate(0 1030.3 307.0)"/><rect x="1028.2" y="357.5" width="4.2" height="9" rx="1" fill="#3a3a3a" stroke="#e8e8e8" stroke-width="1.2" transform="rotate(0 1030.3 362.0)"/><rect x="1028.2" y="412.5" width="4.2" height="9" rx="1" fill="#3a3a3a" stroke="#e8e8e8" stroke-width="1.2" transform="rotate(0 1030.3 417.0)"/><rect x="1028.2" y="486.0" width="4.2" height="9" rx="1" fill="#3a3a3a" stroke="#e8e8e8" stroke-width="1.2" transform="rotate(28 1030.3 490.5)"/><rect x="1028.2" y="577.0" width="4.2" height="9" rx="1" fill="#3a3a3a" stroke="#e8e8e8" stroke-width="1.2" transform="rotate(35 1030.3 581.5)"/><rect x="599.0" y="92.8" width="8" height="4.5" rx="1" fill="#555" stroke="#e8e8e8" stroke-width="1" transform="rotate(-12 603.0 95.0)"/><rect x="877.0" y="80.8" width="8" height="4.5" rx="1" fill="#555" stroke="#e8e8e8" stroke-width="1" transform="rotate(8 881.0 83.0)"/><rect x="951.0" y="77.8" width="8" height="4.5" rx="1" fill="#555" stroke="#e8e8e8" stroke-width="1" transform="rotate(25 955.0 80.0)"/><rect x="599.0" y="626.8" width="8" height="4.5" rx="1" fill="#555" stroke="#e8e8e8" stroke-width="1" transform="rotate(12 603.0 629.0)"/><rect x="877.0" y="638.8" width="8" height="4.5" rx="1" fill="#555" stroke="#e8e8e8" stroke-width="1" transform="rotate(-8 881.0 641.0)"/><rect x="951.0" y="641.8" width="8" height="4.5" rx="1" fill="#555" stroke="#e8e8e8" stroke-width="1" transform="rotate(-25 955.0 644.0)"/><rect x="437.0" y="220.2" width="4" height="8.6" rx="1" fill="#444" stroke="#d8d8d8" stroke-width="1.4" transform="rotate(0 439.0 224.5)"/><rect x="437.0" y="265.0" width="4" height="8.6" rx="1" fill="#444" stroke="#d8d8d8" stroke-width="1.4" transform="rotate(0 439.0 269.3)"/><rect x="437.0" y="450.7" width="4" height="8.6" rx="1" fill="#444" stroke="#d8d8d8" stroke-width="1.4" transform="rotate(0 439.0 455.0)"/><rect x="437.0" y="495.5" width="4" height="8.6" rx="1" fill="#444" stroke="#d8d8d8" stroke-width="1.4" transform="rotate(0 439.0 499.8)"/><rect x="436.9" y="357.9" width="4.2" height="8.6" rx="1" fill="#777" stroke="#f0e010" stroke-width="1.5" transform="rotate(0 439.0 362.2)"/><rect x="412" y="211.6" width="18" height="24" rx="2.5" fill="#5a5a5a" stroke="#d8d8d8" stroke-width="1.7"/><rect x="412" y="251.2" width="18" height="24" rx="2.5" fill="#5a5a5a" stroke="#d8d8d8" stroke-width="1.7"/><rect x="412" y="290.9" width="18" height="24" rx="2.5" fill="#5a5a5a" stroke="#d8d8d8" stroke-width="1.7"/><rect x="412" y="330.6" width="18" height="24" rx="2.5" fill="#5a5a5a" stroke="#d8d8d8" stroke-width="1.7"/><rect x="412" y="370.2" width="18" height="24" rx="2.5" fill="#5a5a5a" stroke="#d8d8d8" stroke-width="1.7"/><rect x="412" y="409.9" width="18" height="24" rx="2.5" fill="#5a5a5a" stroke="#d8d8d8" stroke-width="1.7"/><rect x="412" y="449.5" width="18" height="24" rx="2.5" fill="#5a5a5a" stroke="#d8d8d8" stroke-width="1.7"/><rect x="412" y="489.2" width="18" height="24" rx="2.5" fill="#5a5a5a" stroke="#d8d8d8" stroke-width="1.7"/><g transform="translate(448.9 218.3) rotate(12)"><rect x="-11.5" y="-7.5" width="23" height="15" rx="2.5" fill="#f4f4f4"/><rect x="9.1" y="-0.8" width="1.5" height="2.0" fill="#222"/><rect x="5.9" y="5.3" width="1.8" height="1.2" fill="#222"/><rect x="-2.5" y="2.7" width="2.3" height="2.1" fill="#222"/><rect x="3.1" y="0.7" width="1.0" height="1.5" fill="#222"/><rect x="9.1" y="3.6" width="1.3" height="1.0" fill="#222"/><rect x="-2.4" y="2.2" width="1.0" height="2.1" fill="#222"/><rect x="0.0" y="1.0" width="1.4" height="1.3" fill="#222"/><rect x="-8.7" y="3.1" width="1.6" height="1.3" fill="#222"/><rect x="-4.3" y="-4.5" width="1.4" height="1.8" fill="#222"/><rect x="6.0" y="-3.3" width="1.4" height="1.8" fill="#222"/><rect x="-6.5" y="-4.1" width="1.1" height="1.5" fill="#222"/><rect x="8.7" y="4.6" width="1.9" height="1.4" fill="#222"/><rect x="-8.3" y="2.4" width="2.2" height="1.1" fill="#222"/><rect x="5.6" y="-2.5" width="1.9" height="2.0" fill="#222"/><rect x="0.3" y="-0.3" width="1.2" height="1.2" fill="#222"/><rect x="-2.9" y="1.7" width="1.6" height="1.5" fill="#222"/><path d="M-11 0 H11 M0 -7 V7" stroke="#555" stroke-width="0.6"/></g><g transform="translate(448.9 314.7) rotate(4)"><rect x="-11.5" y="-7.5" width="23" height="15" rx="2.5" fill="#f4f4f4"/><rect x="5.6" y="3.2" width="1.5" height="2.0" fill="#222"/><rect x="-0.5" y="-3.7" width="2.1" height="1.8" fill="#222"/><rect x="4.3" y="0.5" width="1.1" height="1.9" fill="#222"/><rect x="4.8" y="-4.1" width="1.8" height="1.8" fill="#222"/><rect x="0.8" y="1.1" width="1.4" height="1.4" fill="#222"/><rect x="2.4" y="-0.8" width="1.6" height="2.0" fill="#222"/><rect x="2.3" y="3.0" width="2.3" height="1.4" fill="#222"/><rect x="-9.0" y="-1.8" width="1.6" height="1.4" fill="#222"/><rect x="1.1" y="0.1" width="1.9" height="2.1" fill="#222"/><rect x="-8.5" y="3.1" width="1.7" height="1.2" fill="#222"/><rect x="-1.3" y="3.9" width="2.0" height="1.8" fill="#222"/><rect x="-5.5" y="2.7" width="1.6" height="1.9" fill="#222"/><rect x="-3.5" y="4.4" width="2.1" height="1.1" fill="#222"/><rect x="-5.0" y="0.5" width="2.2" height="1.1" fill="#222"/><rect x="2.1" y="0.0" width="2.2" height="1.7" fill="#222"/><rect x="-3.1" y="1.1" width="2.0" height="1.0" fill="#222"/><path d="M-11 0 H11 M0 -7 V7" stroke="#555" stroke-width="0.6"/></g><g transform="translate(448.9 410) rotate(-4)"><rect x="-11.5" y="-7.5" width="23" height="15" rx="2.5" fill="#f4f4f4"/><rect x="3.5" y="5.4" width="1.5" height="1.5" fill="#222"/><rect x="-3.2" y="1.5" width="1.5" height="2.0" fill="#222"/><rect x="-8.0" y="4.5" width="2.3" height="1.3" fill="#222"/><rect x="3.8" y="0.1" width="1.2" height="1.2" fill="#222"/><rect x="-7.0" y="3.9" width="2.3" height="1.9" fill="#222"/><rect x="-3.9" y="4.4" width="2.3" height="2.1" fill="#222"/><rect x="4.2" y="2.1" width="1.5" height="1.7" fill="#222"/><rect x="5.4" y="2.5" width="1.7" height="1.5" fill="#222"/><rect x="-3.3" y="-0.4" width="1.6" height="1.1" fill="#222"/><rect x="-7.4" y="-1.7" width="2.0" height="2.1" fill="#222"/><rect x="4.5" y="-2.6" width="2.1" height="2.1" fill="#222"/><rect x="0.2" y="-4.5" width="1.0" height="2.0" fill="#222"/><rect x="6.7" y="3.5" width="1.7" height="1.3" fill="#222"/><rect x="-5.6" y="2.0" width="1.8" height="1.3" fill="#222"/><rect x="-4.4" y="-4.3" width="1.9" height="1.4" fill="#222"/><rect x="-7.5" y="-0.8" width="1.8" height="1.7" fill="#222"/><path d="M-11 0 H11 M0 -7 V7" stroke="#555" stroke-width="0.6"/></g><g transform="translate(448.9 505.8) rotate(-12)"><rect x="-11.5" y="-7.5" width="23" height="15" rx="2.5" fill="#f4f4f4"/><rect x="-2.8" y="-0.6" width="2.4" height="1.9" fill="#222"/><rect x="2.7" y="-4.6" width="1.7" height="1.9" fill="#222"/><rect x="7.7" y="-3.9" width="2.1" height="2.2" fill="#222"/><rect x="-4.0" y="-2.3" width="2.2" height="1.3" fill="#222"/><rect x="-0.1" y="-5.5" width="1.6" height="1.7" fill="#222"/><rect x="5.3" y="5.3" width="1.3" height="1.0" fill="#222"/><rect x="8.4" y="-2.2" width="1.7" height="1.5" fill="#222"/><rect x="-8.7" y="-0.4" width="2.3" height="2.0" fill="#222"/><rect x="1.5" y="-4.8" width="2.3" height="1.6" fill="#222"/><rect x="-8.6" y="-4.5" width="1.1" height="1.9" fill="#222"/><rect x="1.8" y="-3.2" width="1.2" height="1.5" fill="#222"/><rect x="-2.3" y="1.9" width="1.8" height="1.6" fill="#222"/><rect x="0.9" y="-5.1" width="2.3" height="1.1" fill="#222"/><rect x="4.6" y="3.4" width="1.5" height="1.5" fill="#222"/><rect x="7.1" y="3.1" width="1.2" height="1.7" fill="#222"/><rect x="4.3" y="2.2" width="1.8" height="1.4" fill="#222"/><path d="M-11 0 H11 M0 -7 V7" stroke="#555" stroke-width="0.6"/></g><circle cx="366.9" cy="164.6" r="18.2" fill="#8c8c8c"/><circle cx="366.9" cy="164.6" r="11.7" fill="#ffc600"/><circle cx="363.6" cy="164.8" r="1.35" fill="#111"/><circle cx="370.6" cy="164.8" r="1.35" fill="#111"/><path d="M366 164.8 H369.5" stroke="#b07800" stroke-width="0.9"/></svg>
<div class="t bt" style="left:23.5px;top:59.9px;font-size:15.50px;transform:scaleX(0.90);transform-origin:left 50%;">SPL</div>
<div class="t " style="left:57px;top:62.9px;font-size:13.00px;">(2000 Hz (-/+ 1oct.), 0.0 dBu)</div>
<div class="t bt" style="left:23.0px;top:690.6px;font-size:15.50px;transform:scaleX(0.935);transform-origin:left 50%;">Localization</div>
<div class="t " style="right:368px;top:58.3px;font-size:13.00px;">Soundscape simulation does not include SUB loudspeakers.</div>
<div class="t " style="right:368px;top:73.7px;font-size:13.00px;">SPL mapping is shown at listener height.</div>
<div class="t " style="right:368px;top:688.8px;font-size:13.00px;">Soundscape simulation does not include SUB loudspeakers.</div>
<div class="abs" style="left:674.3px;top:1317.2px;width:109.4px;height:24.6px;border:2px solid #8a8a8a;border-radius:3px"></div><div class="t b" style="left:531.0px;width:400px;text-align:center;top:1323.3px;font-size:16.28px;transform:scaleX(0.955);transform-origin:center 50%;">Clear results</div>
<div class="abs" style="left:1264.5px;top:1317.2px;width:94.3px;height:24.6px;border:2px solid #8a8a8a;border-radius:3px"></div><div class="t b" style="left:1113.65px;width:400px;text-align:center;top:1323.3px;font-size:16.28px;transform:scaleX(0.955);transform-origin:center 50%;">Dispersion</div>
<div class="abs" style="left:1366.6px;top:1317.2px;width:75.2px;height:24.6px;border:2px solid #8a8a8a;border-radius:3px"></div><div class="t b" style="left:1206.1999999999998px;width:400px;text-align:center;top:1323.3px;font-size:16.28px;transform:scaleX(0.955);transform-origin:center 50%;">Solid</div>
<svg style="left:645px;top:1322px" width="20" height="20" viewBox="645 1322 20 20"><path d="M649.6 1326.2 L660.4 1337 M660.4 1326.2 L649.6 1337" stroke="#b0b0b0" stroke-width="2.7" fill="none"/></svg>
<svg style="left:1232px;top:1321px" width="26" height="22" viewBox="1232 1321 26 22"><circle cx="1245.3" cy="1331.6" r="2.8" fill="#a4a4a4"/><path d="M1242.4 1325.2 Q1229.6 1331.6 1242.4 1338 Q1237.4 1331.6 1242.4 1325.2 Z" fill="#a4a4a4"/><path d="M1248.2 1325.2 Q1261 1331.6 1248.2 1338 Q1253.2 1331.6 1248.2 1325.2 Z" fill="#a4a4a4"/></svg>
<div class="t sec" style="left:1462px;top:19.9px;font-size:15.60px;">Color</div>
<div class="hl" style="top:37px"></div>
<div class="t " style="left:1332.5px;width:400px;text-align:center;top:59.1px;font-size:15.60px;">SPL</div>
<div class="t " style="left:1536.5px;width:400px;text-align:center;top:59.1px;font-size:15.60px;">Sound object</div>
<div class="abs" style="left:1516px;top:91.8px;width:32px;height:704.2px;background:#000;border-radius:2px"></div>
<div class="abs" style="left:1517.2px;top:93px;width:29.8px;height:701.8px;background:#fff;border-radius:1.5px"></div>
<div class="abs" style="left:1519.2px;top:95.0px;width:25.9px;height:155.0px;background:#ff0000"></div>
<div class="abs" style="left:1519.2px;top:249.6px;width:25.9px;height:37.8px;background:#ff6414"></div>
<div class="abs" style="left:1519.2px;top:287.0px;width:25.9px;height:37.7px;background:#ffc800"></div>
<div class="abs" style="left:1519.2px;top:324.3px;width:25.9px;height:37.7px;background:#ffff00"></div>
<div class="abs" style="left:1519.2px;top:361.6px;width:25.9px;height:38.2px;background:#00ff00"></div>
<div class="abs" style="left:1519.2px;top:399.4px;width:25.9px;height:38.0px;background:#009966"></div>
<div class="abs" style="left:1519.2px;top:437.0px;width:25.9px;height:38.4px;background:#00ccff"></div>
<div class="abs" style="left:1519.2px;top:475.0px;width:25.9px;height:37.9px;background:#0000ff"></div>
<div class="abs" style="left:1519.2px;top:512.5px;width:25.9px;height:280.9px;background:#8b008b"></div>
<div class="t g" style="right:285.20000000000005px;top:86.9px;font-size:14.50px;">144dB</div>
<div class="abs" style="left:1512.8px;top:93.1px;width:4.5px;height:1.5px;background:#9a9a9a"></div>
<div class="t g" style="right:285.20000000000005px;top:164.7px;font-size:14.50px;">132dB</div>
<div class="abs" style="left:1512.8px;top:170.9px;width:4.5px;height:1.5px;background:#9a9a9a"></div>
<div class="t g" style="right:285.20000000000005px;top:242.5px;font-size:14.50px;">120dB</div>
<div class="abs" style="left:1512.8px;top:248.7px;width:4.5px;height:1.5px;background:#9a9a9a"></div>
<div class="t g" style="right:285.20000000000005px;top:320.3px;font-size:14.50px;">108dB</div>
<div class="abs" style="left:1512.8px;top:326.5px;width:4.5px;height:1.5px;background:#9a9a9a"></div>
<div class="t g" style="right:285.20000000000005px;top:398.1px;font-size:14.50px;">96dB</div>
<div class="abs" style="left:1512.8px;top:404.3px;width:4.5px;height:1.5px;background:#9a9a9a"></div>
<div class="t g" style="right:285.20000000000005px;top:475.9px;font-size:14.50px;">84dB</div>
<div class="abs" style="left:1512.8px;top:482.1px;width:4.5px;height:1.5px;background:#9a9a9a"></div>
<div class="t g" style="right:285.20000000000005px;top:553.7px;font-size:14.50px;">72dB</div>
<div class="abs" style="left:1512.8px;top:559.9px;width:4.5px;height:1.5px;background:#9a9a9a"></div>
<div class="t g" style="right:285.20000000000005px;top:631.5px;font-size:14.50px;">60dB</div>
<div class="abs" style="left:1512.8px;top:637.7px;width:4.5px;height:1.5px;background:#9a9a9a"></div>
<div class="t g" style="right:285.20000000000005px;top:709.3px;font-size:14.50px;">48dB</div>
<div class="abs" style="left:1512.8px;top:715.5px;width:4.5px;height:1.5px;background:#9a9a9a"></div>
<div class="t g" style="right:285.20000000000005px;top:787.1px;font-size:14.50px;">36dB</div>
<div class="abs" style="left:1512.8px;top:793.3px;width:4.5px;height:1.5px;background:#9a9a9a"></div>
<svg style="left:1550px;top:332px" width="16" height="26" viewBox="0 0 16 26"><path d="M2.6 12.8 L13.3 3.6 L13.3 22.4 Z" fill="#a8a8a8"/></svg>
<div class="t " style="left:1571.5px;top:339.9px;font-size:10.50px;-webkit-text-stroke:0.3px #fff;">Highest SPL</div>
<div class="abs" style="left:1720px;top:88.8px;width:32px;height:706px;background:#000;border-radius:2.5px"></div>
<div class="abs" style="left:1721.2px;top:90.2px;width:29.8px;height:703.4px;background:#fff;border-radius:2px"></div>
<div class="abs" style="left:1723px;top:92px;width:26.3px;height:700px;background:linear-gradient(#009966 0%,#00a452 8%,#00e008 17%,#00ff00 22%,#00ff00 28.5%,#a8ff00 35%,#ffff00 40.5%,#ffd400 52%,#ffa200 66%,#ff6200 77%,#ff1400 86%,#ff0000 88.5%,#ff0000 100%)"></div>
<div class="t g" style="right:95.20000000000005px;top:84.5px;font-size:14.50px;">0°</div>
<div class="t g" style="right:91.40000000000009px;top:318.3px;font-size:14.50px;">30°</div>
<div class="t g" style="right:91.40000000000009px;top:552.3px;font-size:14.50px;">60°</div>
<div class="t g" style="right:82.79999999999995px;top:786.3px;font-size:14.50px;">&gt;=90°</div>
<div class="btn" style="left:1489.3px;top:829.3px;width:34.9px;height:27px;border-radius:2.5px 0 0 2.5px"></div><div class="abs" style="left:1499.7px;top:841.2px;width:14px;height:3.2px;background:#fff"></div><div class="btn" style="left:1525.1px;top:829.3px;width:34.9px;height:27px;border-radius:0 2.5px 2.5px 0"></div><div class="abs" style="left:1535.6px;top:841.2px;width:14px;height:3.2px;background:#fff"></div><div class="abs" style="left:1541.0px;top:835.8px;width:3.2px;height:14px;background:#fff"></div>
<div class="abs" style="left:1568px;top:828.6px;width:68.5px;height:24.2px;border:2px solid #7c7c7c;border-radius:3px;background:#1c1c1c"></div>
<div class="abs" style="left:1604.4px;top:830.2px;width:35.6px;height:25.4px;background:#6a8da3;border-radius:0 2px 2px 0"></div>
<div class="t b" style="left:1386.2px;width:400px;text-align:center;top:834.2px;font-size:16.28px;transform:scaleX(0.955);transform-origin:center 50%;">3</div>
<div class="t b" style="left:1421.8px;width:400px;text-align:center;top:834.2px;font-size:16.28px;transform:scaleX(0.955);transform-origin:center 50%;">6</div>
<div class="t " style="left:1386.3px;width:400px;text-align:center;top:866.8px;font-size:15.60px;">dB per division</div>
<div class="t " style="left:1530.5px;width:400px;text-align:center;top:827.4px;font-size:15.60px;">Localization</div>
<div class="t " style="left:1530.5px;width:400px;text-align:center;top:845.4px;font-size:15.60px;">deviation</div>
<div class="t " style="left:1462px;top:915.2px;font-size:15.60px;">SPL @ 2000 Hz (-/+ 1oct.)</div>
<div class="hl" style="top:933px"></div>
<div class="t g" style="left:1470px;top:944.4px;font-size:15.60px;">Level (dBu):</div>
<div class="fld" style="left:1584.5px;top:938px;width:129px;height:28px"></div>
<div class="t " style="right:90px;top:944.4px;font-size:15.60px;">0.0</div>
<div class="btn" style="left:1714.3px;top:938px;width:31.8px;height:28px;border-radius:2.5px 0 0 2.5px"></div><div class="abs" style="left:1723.2px;top:950.4px;width:14px;height:3.2px;background:#fff"></div><div class="btn" style="left:1747.0px;top:938px;width:31.8px;height:28px;border-radius:0 2.5px 2.5px 0"></div><div class="abs" style="left:1755.9px;top:950.4px;width:14px;height:3.2px;background:#fff"></div><div class="abs" style="left:1761.3px;top:945.0px;width:3.2px;height:14px;background:#fff"></div>
<div class="hl" style="top:968px"></div>
<div class="t g" style="left:1470px;top:978.2px;font-size:15.60px;">Highest SPL:</div>
<div class="abs" style="left:1584.5px;top:972.8px;width:191.6px;height:21.4px;border:2px solid #747474"></div>
<div class="t " style="right:24px;top:978.2px;font-size:15.60px;">105.3 dB</div>
<div class="hl" style="top:1000px"></div>
<div class="t " style="left:1462px;top:1032.0px;font-size:15.60px;">Sound object</div>
<div class="hl" style="top:1050px"></div>
<div class="t g" style="left:1470px;top:1060.4px;font-size:15.60px;">Position sound object</div>
<div class="abs" style="left:1626.5px;top:1053px;width:153px;height:28.3px;background:#6a8da3;border-radius:2.5px"></div>
<svg style="left:1642px;top:1058.5px" width="18" height="18" viewBox="0 0 18 18"><circle cx="9" cy="9" r="6.3" fill="none" stroke="#fff" stroke-width="1.6"/><circle cx="9" cy="9" r="3.2" fill="#fff"/></svg>
<div class="t b" style="left:1666.5px;top:1060.2px;font-size:16.28px;transform:scaleX(0.955);transform-origin:left 50%;">Sound object</div>
<div class="hl" style="top:1082px"></div>
<div class="t g" style="left:1470px;top:1094.0px;font-size:15.60px;">x:</div>
<div class="fld" style="left:1576.5px;top:1087px;width:137px;height:29px"></div>
<div class="t " style="left:1579.5px;top:1094.0px;font-size:15.60px;">-14.30 ft</div>
<div class="btn" style="left:1714.3px;top:1087px;width:31.8px;height:29px;border-radius:2.5px 0 0 2.5px"></div><div class="abs" style="left:1723.2px;top:1099.9px;width:14px;height:3.2px;background:#fff"></div><div class="btn" style="left:1747.0px;top:1087px;width:31.8px;height:29px;border-radius:0 2.5px 2.5px 0"></div><div class="abs" style="left:1755.9px;top:1099.9px;width:14px;height:3.2px;background:#fff"></div><div class="abs" style="left:1761.3px;top:1094.5px;width:3.2px;height:14px;background:#fff"></div>
<div class="hl" style="top:1117.8px"></div>
<div class="t g" style="left:1470px;top:1129.0px;font-size:15.60px;">y:</div>
<div class="fld" style="left:1576.5px;top:1122px;width:137px;height:29px"></div>
<div class="t " style="left:1579.5px;top:1129.0px;font-size:15.60px;">35.61 ft</div>
<div class="btn" style="left:1714.3px;top:1122px;width:31.8px;height:29px;border-radius:2.5px 0 0 2.5px"></div><div class="abs" style="left:1723.2px;top:1134.9px;width:14px;height:3.2px;background:#fff"></div><div class="btn" style="left:1747.0px;top:1122px;width:31.8px;height:29px;border-radius:0 2.5px 2.5px 0"></div><div class="abs" style="left:1755.9px;top:1134.9px;width:14px;height:3.2px;background:#fff"></div><div class="abs" style="left:1761.3px;top:1129.5px;width:3.2px;height:14px;background:#fff"></div>
<div class="hl" style="top:1152.8px"></div>
<div class="t g" style="left:1470px;top:1164.0px;font-size:15.60px;">Spread:</div>
<div class="fld" style="left:1576.5px;top:1157px;width:137px;height:29px"></div>
<div class="t " style="left:1579.5px;top:1164.0px;font-size:15.60px;">0.5</div>
<div class="btn" style="left:1714.3px;top:1157px;width:31.8px;height:29px;border-radius:2.5px 0 0 2.5px"></div><div class="abs" style="left:1723.2px;top:1169.9px;width:14px;height:3.2px;background:#fff"></div><div class="btn" style="left:1747.0px;top:1157px;width:31.8px;height:29px;border-radius:0 2.5px 2.5px 0"></div><div class="abs" style="left:1755.9px;top:1169.9px;width:14px;height:3.2px;background:#fff"></div><div class="abs" style="left:1761.3px;top:1164.5px;width:3.2px;height:14px;background:#fff"></div>
<div class="hl" style="top:1187.8px"></div>
<div class="t g" style="left:1470px;top:1198.1px;font-size:15.60px;">Mode:</div>
<div class="fld" style="left:1575.5px;top:1192.5px;width:171.5px;height:26px"></div><div class="btn" style="left:1747.5px;top:1192.5px;width:31px;height:26px;border-radius:0 2.5px 2.5px 0"></div><svg style="left:1754px;top:1200.0px" width="18" height="14" viewBox="0 0 18 14"><path d="M2.3 3.5 L9 10.4 L15.7 3.5" fill="none" stroke="#fff" stroke-width="2.1"/></svg><div class="t " style="left:1580.0px;top:1198.3px;font-size:15.60px;">Full</div>
<div class="hl" style="top:1220.5px"></div>
<div class="t " style="left:1462px;top:1252.1px;font-size:15.60px;">Soundscape simulation</div>
<div class="hl" style="top:1270px"></div>
<div class="t g" style="left:1470px;top:1279.7px;font-size:15.60px;">Localization model:</div>
<div class="fld" style="left:1618px;top:1274px;width:129px;height:26px"></div><div class="btn" style="left:1747.5px;top:1274px;width:31px;height:26px;border-radius:0 2.5px 2.5px 0"></div><svg style="left:1754px;top:1281.5px" width="18" height="14" viewBox="0 0 18 14"><path d="M2.3 3.5 L9 10.4 L15.7 3.5" fill="none" stroke="#fff" stroke-width="2.1"/></svg><div class="t " style="left:1622.5px;top:1279.8px;font-size:15.60px;">Binaural</div>
<div class="hl" style="top:1302.3px"></div>
<div class="t g" style="left:1470px;top:1312.4px;font-size:15.60px;">Resolution:</div>
<div class="fld" style="left:1618px;top:1307px;width:129px;height:26px"></div><div class="btn" style="left:1747.5px;top:1307px;width:31px;height:26px;border-radius:0 2.5px 2.5px 0"></div><svg style="left:1754px;top:1314.5px" width="18" height="14" viewBox="0 0 18 14"><path d="M2.3 3.5 L9 10.4 L15.7 3.5" fill="none" stroke="#fff" stroke-width="2.1"/></svg><div class="t " style="left:1622.5px;top:1312.8px;font-size:15.60px;">Mid (7ft)</div>
<div class="hl" style="top:1334.8px"></div>
<div class="abs" style="left:1470.2px;top:1339.6px;width:305.4px;height:24.4px;border:2px solid #f4f4f4;border-radius:3.5px;background:linear-gradient(#8e8e8e 0%,#858585 45%,#767676 55%,#6e6e6e 100%)"></div>
<div class="t b" style="left:1424.5px;width:400px;text-align:center;top:1346.4px;font-size:16.28px;transform:scaleX(0.955);transform-origin:center 50%;">Recalculate</div>
<div class="hl" style="top:1369.8px"></div>
</div>
</body></html>
